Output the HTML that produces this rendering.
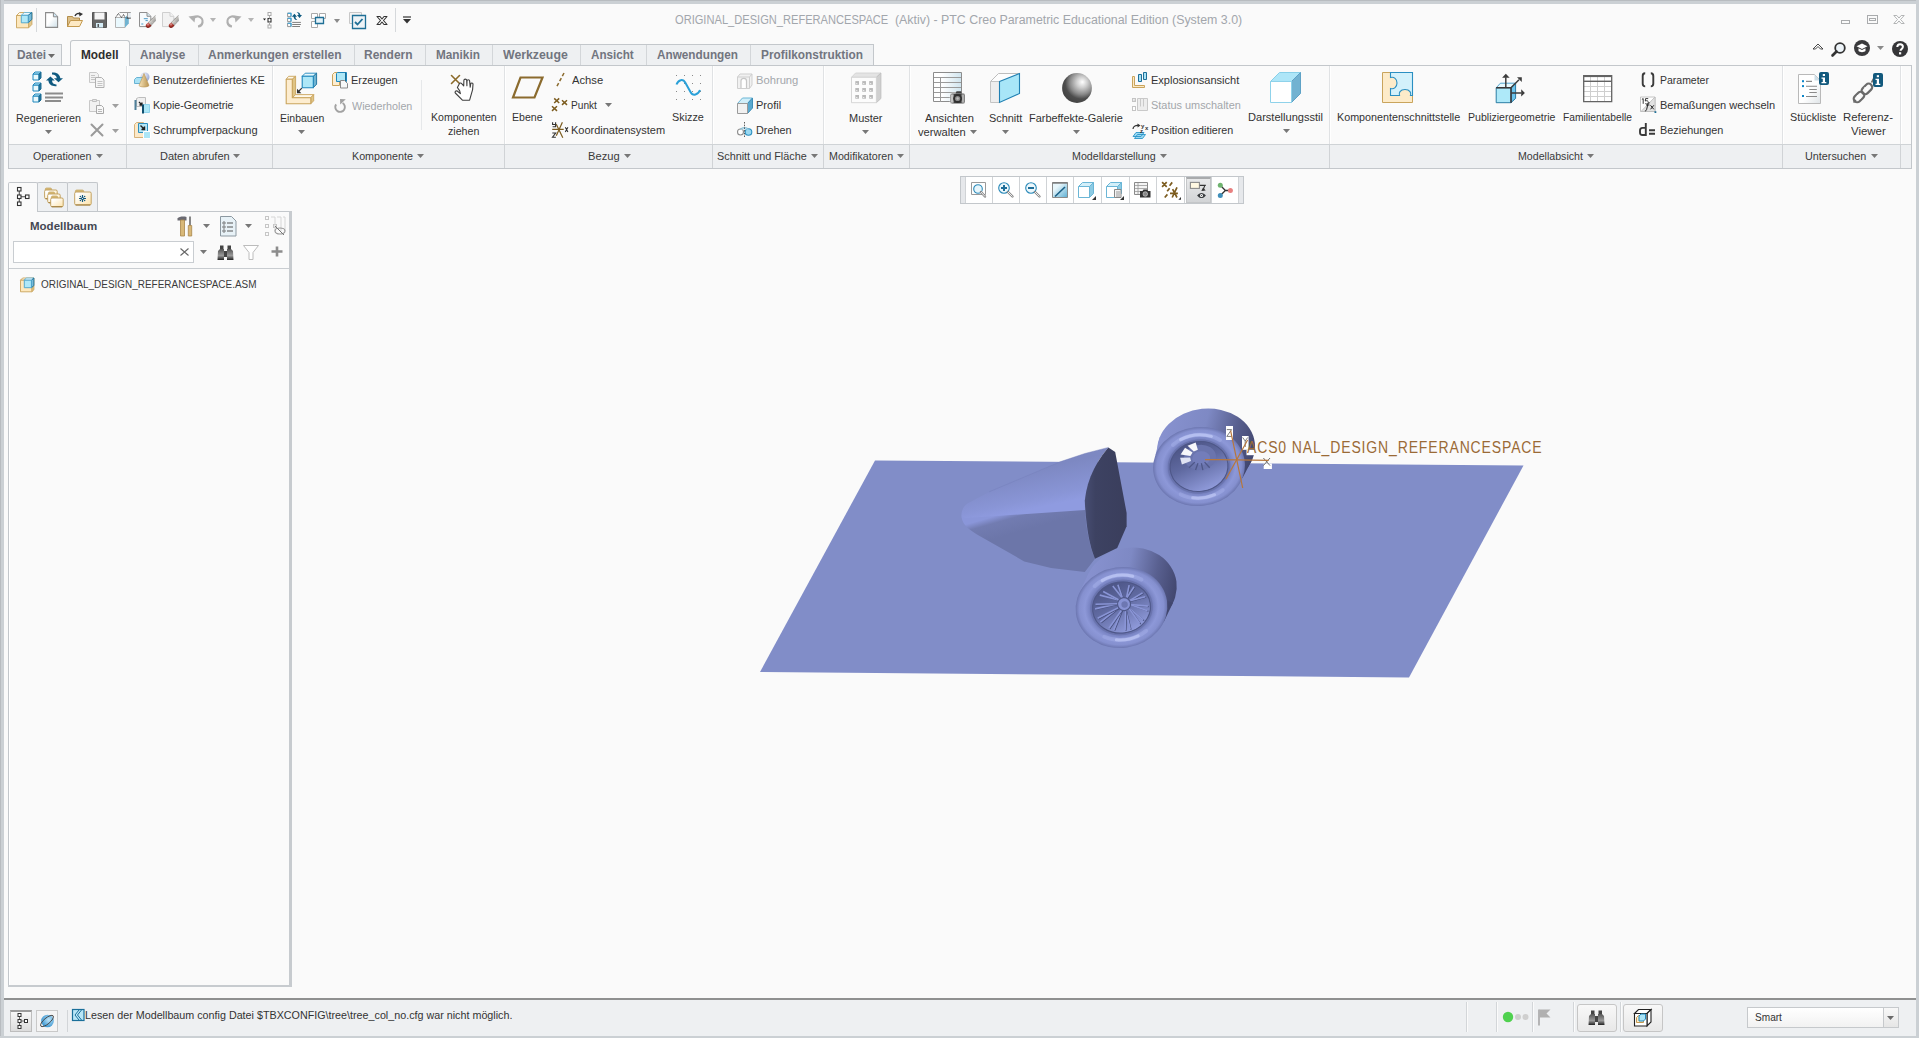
<!DOCTYPE html>
<html><head><meta charset="utf-8"><title>Creo</title>
<style>
html,body{margin:0;padding:0}
body{width:1919px;height:1038px;position:relative;overflow:hidden;background:#fafafa;font-family:"Liberation Sans",sans-serif}
.t{position:absolute;white-space:nowrap}
svg{overflow:visible}
</style></head><body>
<div style="position:absolute;left:0px;top:0px;width:1919px;height:4px;background:#cbd0d4"></div>
<div style="position:absolute;left:0px;top:0px;width:1919px;height:1px;background:#b8bcc0"></div>
<div style="position:absolute;left:0px;top:0px;width:4px;height:1038px;background:#cbd0d4"></div>
<div style="position:absolute;left:0px;top:0px;width:1px;height:1038px;background:#b8bcc0"></div>
<div style="position:absolute;left:1916px;top:0px;width:3px;height:1038px;background:#cbd0d4"></div>
<div style="position:absolute;left:0px;top:1036px;width:1919px;height:2px;background:#cbd0d4"></div>
<div class="t" style="left:674.65px;top:14.34px;font-size:12px;line-height:12px;font-weight:400;color:#a2a6ac;transform:scaleX(0.9251);transform-origin:0 0;">ORIGINAL_DESIGN_REFERANCESPACE</div>
<div class="t" style="left:895.25px;top:14.34px;font-size:12px;line-height:12px;font-weight:400;color:#a2a6ac;transform:scaleX(1.0308);transform-origin:0 0;">(Aktiv) - PTC Creo Parametric Educational Edition (System 3.0)</div>
<div style="position:absolute;left:129px;top:44px;width:745px;height:21px;background:#eef0f2;border-top:1px solid #c3c7cb;border-right:1px solid #c3c7cb;box-sizing:border-box"></div>
<div style="position:absolute;left:8px;top:44px;width:54px;height:22px;background:#eef0f2;border:1px solid #c3c7cb;border-bottom:none;box-sizing:border-box"></div>
<div style="position:absolute;left:8px;top:65px;width:1904px;height:1px;background:#c3c7cb"></div>
<div style="position:absolute;left:70px;top:40px;width:60px;height:26px;background:#fafafa;border:1px solid #c3c7cb;border-bottom:none;border-radius:3px 3px 0 0;box-sizing:border-box"></div>
<div style="position:absolute;left:198px;top:45px;width:1px;height:20px;background:#d3d6d9"></div>
<div style="position:absolute;left:354px;top:45px;width:1px;height:20px;background:#d3d6d9"></div>
<div style="position:absolute;left:425px;top:45px;width:1px;height:20px;background:#d3d6d9"></div>
<div style="position:absolute;left:492px;top:45px;width:1px;height:20px;background:#d3d6d9"></div>
<div style="position:absolute;left:580px;top:45px;width:1px;height:20px;background:#d3d6d9"></div>
<div style="position:absolute;left:646px;top:45px;width:1px;height:20px;background:#d3d6d9"></div>
<div style="position:absolute;left:750px;top:45px;width:1px;height:20px;background:#d3d6d9"></div>
<div class="t" style="left:16.60px;top:49.34px;font-size:12px;line-height:12px;font-weight:700;color:#72757f;transform:scaleX(0.9893);transform-origin:0 0;">Datei</div>
<svg style="position:absolute;left:48px;top:54px;" width="7" height="4" viewBox="0 0 7 4"><path d="M0 0H7L3.5 4Z" fill="#6a6a6a"/></svg>
<div class="t" style="left:80.81px;top:49.34px;font-size:12px;line-height:12px;font-weight:700;color:#2e2e2e;transform:scaleX(0.9865);transform-origin:0 0;">Modell</div>
<div class="t" style="left:140.41px;top:49.34px;font-size:12px;line-height:12px;font-weight:700;color:#72757f;transform:scaleX(0.9822);transform-origin:0 0;">Analyse</div>
<div class="t" style="left:208.40px;top:49.34px;font-size:12px;line-height:12px;font-weight:700;color:#72757f;transform:scaleX(1.0015);transform-origin:0 0;">Anmerkungen erstellen</div>
<div class="t" style="left:364.40px;top:49.34px;font-size:12px;line-height:12px;font-weight:700;color:#72757f;transform:scaleX(0.9979);transform-origin:0 0;">Rendern</div>
<div class="t" style="left:435.61px;top:49.34px;font-size:12px;line-height:12px;font-weight:700;color:#72757f;transform:scaleX(0.9818);transform-origin:0 0;">Manikin</div>
<div class="t" style="left:502.80px;top:49.34px;font-size:12px;line-height:12px;font-weight:700;color:#72757f;transform:scaleX(1.0254);transform-origin:0 0;">Werkzeuge</div>
<div class="t" style="left:591.00px;top:49.34px;font-size:12px;line-height:12px;font-weight:700;color:#72757f;transform:scaleX(0.9716);transform-origin:0 0;">Ansicht</div>
<div class="t" style="left:657.00px;top:49.34px;font-size:12px;line-height:12px;font-weight:700;color:#72757f;transform:scaleX(0.9793);transform-origin:0 0;">Anwendungen</div>
<div class="t" style="left:760.51px;top:49.34px;font-size:12px;line-height:12px;font-weight:700;color:#72757f;transform:scaleX(0.9868);transform-origin:0 0;">Profilkonstruktion</div>
<div style="position:absolute;left:8px;top:65px;width:1px;height:104px;background:#c3c7cb"></div>
<div style="position:absolute;left:1911px;top:65px;width:1px;height:104px;background:#c3c7cb"></div>
<div style="position:absolute;left:9px;top:144px;width:1902px;height:24px;background:#eef0f2;border-top:1px solid #cfd3d6;box-sizing:border-box"></div>
<div style="position:absolute;left:8px;top:168px;width:1904px;height:1px;background:#c3c7cb"></div>
<div style="position:absolute;left:126px;top:66px;width:1px;height:78px;background:#e0e2e4"></div>
<div style="position:absolute;left:127px;top:66px;width:1px;height:78px;background:#ffffff"></div>
<div style="position:absolute;left:126px;top:145px;width:1px;height:23px;background:#d0d3d6"></div>
<div style="position:absolute;left:272px;top:66px;width:1px;height:78px;background:#e0e2e4"></div>
<div style="position:absolute;left:273px;top:66px;width:1px;height:78px;background:#ffffff"></div>
<div style="position:absolute;left:272px;top:145px;width:1px;height:23px;background:#d0d3d6"></div>
<div style="position:absolute;left:504px;top:66px;width:1px;height:78px;background:#e0e2e4"></div>
<div style="position:absolute;left:505px;top:66px;width:1px;height:78px;background:#ffffff"></div>
<div style="position:absolute;left:504px;top:145px;width:1px;height:23px;background:#d0d3d6"></div>
<div style="position:absolute;left:712px;top:66px;width:1px;height:78px;background:#e0e2e4"></div>
<div style="position:absolute;left:713px;top:66px;width:1px;height:78px;background:#ffffff"></div>
<div style="position:absolute;left:712px;top:145px;width:1px;height:23px;background:#d0d3d6"></div>
<div style="position:absolute;left:823px;top:66px;width:1px;height:78px;background:#e0e2e4"></div>
<div style="position:absolute;left:824px;top:66px;width:1px;height:78px;background:#ffffff"></div>
<div style="position:absolute;left:823px;top:145px;width:1px;height:23px;background:#d0d3d6"></div>
<div style="position:absolute;left:909px;top:66px;width:1px;height:78px;background:#e0e2e4"></div>
<div style="position:absolute;left:910px;top:66px;width:1px;height:78px;background:#ffffff"></div>
<div style="position:absolute;left:909px;top:145px;width:1px;height:23px;background:#d0d3d6"></div>
<div style="position:absolute;left:1329px;top:66px;width:1px;height:78px;background:#e0e2e4"></div>
<div style="position:absolute;left:1330px;top:66px;width:1px;height:78px;background:#ffffff"></div>
<div style="position:absolute;left:1329px;top:145px;width:1px;height:23px;background:#d0d3d6"></div>
<div style="position:absolute;left:1782px;top:66px;width:1px;height:78px;background:#e0e2e4"></div>
<div style="position:absolute;left:1783px;top:66px;width:1px;height:78px;background:#ffffff"></div>
<div style="position:absolute;left:1782px;top:145px;width:1px;height:23px;background:#d0d3d6"></div>
<div style="position:absolute;left:1900px;top:66px;width:1px;height:78px;background:#e0e2e4"></div>
<div style="position:absolute;left:1901px;top:66px;width:1px;height:78px;background:#ffffff"></div>
<div style="position:absolute;left:1900px;top:145px;width:1px;height:23px;background:#d0d3d6"></div>
<div class="t" style="left:15.62px;top:113.19px;font-size:11px;line-height:11px;font-weight:400;color:#333333;transform:scaleX(0.9742);transform-origin:0 0;">Regenerieren</div>
<div class="t" style="left:153.40px;top:75.19px;font-size:11px;line-height:11px;font-weight:400;color:#333333;transform:scaleX(0.9946);transform-origin:0 0;">Benutzerdefiniertes KE</div>
<div class="t" style="left:153.43px;top:100.19px;font-size:11px;line-height:11px;font-weight:400;color:#333333;transform:scaleX(0.9683);transform-origin:0 0;">Kopie-Geometrie</div>
<div class="t" style="left:153.40px;top:125.19px;font-size:11px;line-height:11px;font-weight:400;color:#333333;transform:scaleX(1.0058);transform-origin:0 0;">Schrumpfverpackung</div>
<div class="t" style="left:279.53px;top:113.19px;font-size:11px;line-height:11px;font-weight:400;color:#333333;transform:scaleX(0.9544);transform-origin:0 0;">Einbauen</div>
<div class="t" style="left:350.81px;top:75.19px;font-size:11px;line-height:11px;font-weight:400;color:#333333;transform:scaleX(0.9913);transform-origin:0 0;">Erzeugen</div>
<div class="t" style="left:351.80px;top:101.19px;font-size:11px;line-height:11px;font-weight:400;color:#a3a7ab;transform:scaleX(0.9770);transform-origin:0 0;">Wiederholen</div>
<div class="t" style="left:430.53px;top:112.19px;font-size:11px;line-height:11px;font-weight:400;color:#333333;transform:scaleX(0.9596);transform-origin:0 0;">Komponenten</div>
<div class="t" style="left:448.02px;top:126.19px;font-size:11px;line-height:11px;font-weight:400;color:#333333;transform:scaleX(0.9656);transform-origin:0 0;">ziehen</div>
<div class="t" style="left:512.43px;top:112.19px;font-size:11px;line-height:11px;font-weight:400;color:#333333;transform:scaleX(0.9613);transform-origin:0 0;">Ebene</div>
<div class="t" style="left:572.40px;top:75.19px;font-size:11px;line-height:11px;font-weight:400;color:#333333;transform:scaleX(1.0194);transform-origin:0 0;">Achse</div>
<div class="t" style="left:571.46px;top:100.19px;font-size:11px;line-height:11px;font-weight:400;color:#333333;transform:scaleX(0.9214);transform-origin:0 0;">Punkt</div>
<div class="t" style="left:571.40px;top:125.19px;font-size:11px;line-height:11px;font-weight:400;color:#333333;transform:scaleX(0.9989);transform-origin:0 0;">Koordinatensystem</div>
<div class="t" style="left:672.41px;top:112.19px;font-size:11px;line-height:11px;font-weight:400;color:#333333;transform:scaleX(0.9844);transform-origin:0 0;">Skizze</div>
<div class="t" style="left:756.39px;top:75.19px;font-size:11px;line-height:11px;font-weight:400;color:#a3a7ab;transform:scaleX(1.0175);transform-origin:0 0;">Bohrung</div>
<div class="t" style="left:756.40px;top:100.19px;font-size:11px;line-height:11px;font-weight:400;color:#333333;transform:scaleX(1.0042);transform-origin:0 0;">Profil</div>
<div class="t" style="left:756.41px;top:125.19px;font-size:11px;line-height:11px;font-weight:400;color:#333333;transform:scaleX(0.9829);transform-origin:0 0;">Drehen</div>
<div class="t" style="left:848.60px;top:113.19px;font-size:11px;line-height:11px;font-weight:400;color:#333333;transform:scaleX(0.9970);transform-origin:0 0;">Muster</div>
<div class="t" style="left:924.60px;top:113.19px;font-size:11px;line-height:11px;font-weight:400;color:#333333;transform:scaleX(1.0125);transform-origin:0 0;">Ansichten</div>
<div class="t" style="left:918.21px;top:127.19px;font-size:11px;line-height:11px;font-weight:400;color:#333333;transform:scaleX(1.0128);transform-origin:0 0;">verwalten</div>
<div class="t" style="left:988.61px;top:113.19px;font-size:11px;line-height:11px;font-weight:400;color:#333333;transform:scaleX(0.9909);transform-origin:0 0;">Schnitt</div>
<div class="t" style="left:1029.41px;top:113.19px;font-size:11px;line-height:11px;font-weight:400;color:#333333;transform:scaleX(0.9926);transform-origin:0 0;">Farbeffekte-Galerie</div>
<div class="t" style="left:1151.20px;top:75.19px;font-size:11px;line-height:11px;font-weight:400;color:#333333;transform:scaleX(1.0023);transform-origin:0 0;">Explosionsansicht</div>
<div class="t" style="left:1151.21px;top:100.19px;font-size:11px;line-height:11px;font-weight:400;color:#a3a7ab;transform:scaleX(0.9921);transform-origin:0 0;">Status umschalten</div>
<div class="t" style="left:1151.22px;top:125.19px;font-size:11px;line-height:11px;font-weight:400;color:#333333;transform:scaleX(0.9747);transform-origin:0 0;">Position editieren</div>
<div class="t" style="left:1247.99px;top:112.19px;font-size:11px;line-height:11px;font-weight:400;color:#333333;transform:scaleX(1.0055);transform-origin:0 0;">Darstellungsstil</div>
<div class="t" style="left:1337.01px;top:112.19px;font-size:11px;line-height:11px;font-weight:400;color:#333333;transform:scaleX(0.9776);transform-origin:0 0;">Komponentenschnittstelle</div>
<div class="t" style="left:1467.63px;top:112.19px;font-size:11px;line-height:11px;font-weight:400;color:#333333;transform:scaleX(0.9600);transform-origin:0 0;">Publiziergeometrie</div>
<div class="t" style="left:1562.65px;top:112.19px;font-size:11px;line-height:11px;font-weight:400;color:#333333;transform:scaleX(0.9315);transform-origin:0 0;">Familientabelle</div>
<div class="t" style="left:1659.83px;top:75.19px;font-size:11px;line-height:11px;font-weight:400;color:#333333;transform:scaleX(0.9529);transform-origin:0 0;">Parameter</div>
<div class="t" style="left:1659.80px;top:100.19px;font-size:11px;line-height:11px;font-weight:400;color:#333333;transform:scaleX(1.0018);transform-origin:0 0;">Bemaßungen wechseln</div>
<div class="t" style="left:1659.81px;top:125.19px;font-size:11px;line-height:11px;font-weight:400;color:#333333;transform:scaleX(0.9873);transform-origin:0 0;">Beziehungen</div>
<div class="t" style="left:1789.81px;top:112.19px;font-size:11px;line-height:11px;font-weight:400;color:#333333;transform:scaleX(0.9826);transform-origin:0 0;">Stückliste</div>
<div class="t" style="left:1843.37px;top:112.19px;font-size:11px;line-height:11px;font-weight:400;color:#333333;transform:scaleX(1.0340);transform-origin:0 0;">Referenz-</div>
<div class="t" style="left:1851.22px;top:126.19px;font-size:11px;line-height:11px;font-weight:400;color:#333333;transform:scaleX(1.0412);transform-origin:0 0;">Viewer</div>
<div class="t" style="left:32.82px;top:151.19px;font-size:11px;line-height:11px;font-weight:400;color:#3a3a3a;transform:scaleX(0.9650);transform-origin:0 0;">Operationen</div>
<svg style="position:absolute;left:96px;top:154px;" width="7" height="4" viewBox="0 0 7 4"><path d="M0 0H7L3.5 4Z" fill="#777"/></svg>
<div class="t" style="left:159.60px;top:151.19px;font-size:11px;line-height:11px;font-weight:400;color:#3a3a3a;transform:scaleX(0.9986);transform-origin:0 0;">Daten abrufen</div>
<svg style="position:absolute;left:233px;top:154px;" width="7" height="4" viewBox="0 0 7 4"><path d="M0 0H7L3.5 4Z" fill="#777"/></svg>
<div class="t" style="left:352.02px;top:151.19px;font-size:11px;line-height:11px;font-weight:400;color:#3a3a3a;transform:scaleX(0.9754);transform-origin:0 0;">Komponente</div>
<svg style="position:absolute;left:417px;top:154px;" width="7" height="4" viewBox="0 0 7 4"><path d="M0 0H7L3.5 4Z" fill="#777"/></svg>
<div class="t" style="left:587.59px;top:151.19px;font-size:11px;line-height:11px;font-weight:400;color:#3a3a3a;transform:scaleX(1.0133);transform-origin:0 0;">Bezug</div>
<svg style="position:absolute;left:624px;top:154px;" width="7" height="4" viewBox="0 0 7 4"><path d="M0 0H7L3.5 4Z" fill="#777"/></svg>
<div class="t" style="left:717.41px;top:151.19px;font-size:11px;line-height:11px;font-weight:400;color:#3a3a3a;transform:scaleX(0.9844);transform-origin:0 0;">Schnitt und Fläche</div>
<svg style="position:absolute;left:811px;top:154px;" width="7" height="4" viewBox="0 0 7 4"><path d="M0 0H7L3.5 4Z" fill="#777"/></svg>
<div class="t" style="left:828.82px;top:151.19px;font-size:11px;line-height:11px;font-weight:400;color:#3a3a3a;transform:scaleX(0.9708);transform-origin:0 0;">Modifikatoren</div>
<svg style="position:absolute;left:897px;top:154px;" width="7" height="4" viewBox="0 0 7 4"><path d="M0 0H7L3.5 4Z" fill="#777"/></svg>
<div class="t" style="left:1072.03px;top:151.19px;font-size:11px;line-height:11px;font-weight:400;color:#3a3a3a;transform:scaleX(0.9706);transform-origin:0 0;">Modelldarstellung</div>
<svg style="position:absolute;left:1160px;top:154px;" width="7" height="4" viewBox="0 0 7 4"><path d="M0 0H7L3.5 4Z" fill="#777"/></svg>
<div class="t" style="left:1517.62px;top:151.19px;font-size:11px;line-height:11px;font-weight:400;color:#3a3a3a;transform:scaleX(0.9657);transform-origin:0 0;">Modellabsicht</div>
<svg style="position:absolute;left:1587px;top:154px;" width="7" height="4" viewBox="0 0 7 4"><path d="M0 0H7L3.5 4Z" fill="#777"/></svg>
<div class="t" style="left:1805.01px;top:151.19px;font-size:11px;line-height:11px;font-weight:400;color:#3a3a3a;transform:scaleX(0.9823);transform-origin:0 0;">Untersuchen</div>
<svg style="position:absolute;left:1871px;top:154px;" width="7" height="4" viewBox="0 0 7 4"><path d="M0 0H7L3.5 4Z" fill="#777"/></svg>
<svg style="position:absolute;left:45px;top:130px;" width="7" height="4" viewBox="0 0 7 4"><path d="M0 0H7L3.5 4Z" fill="#777"/></svg>
<svg style="position:absolute;left:298px;top:130px;" width="7" height="4" viewBox="0 0 7 4"><path d="M0 0H7L3.5 4Z" fill="#777"/></svg>
<svg style="position:absolute;left:862px;top:130px;" width="7" height="4" viewBox="0 0 7 4"><path d="M0 0H7L3.5 4Z" fill="#777"/></svg>
<svg style="position:absolute;left:970px;top:130px;" width="7" height="4" viewBox="0 0 7 4"><path d="M0 0H7L3.5 4Z" fill="#777"/></svg>
<svg style="position:absolute;left:1002px;top:130px;" width="7" height="4" viewBox="0 0 7 4"><path d="M0 0H7L3.5 4Z" fill="#777"/></svg>
<svg style="position:absolute;left:1073px;top:130px;" width="7" height="4" viewBox="0 0 7 4"><path d="M0 0H7L3.5 4Z" fill="#777"/></svg>
<svg style="position:absolute;left:1283px;top:129px;" width="7" height="4" viewBox="0 0 7 4"><path d="M0 0H7L3.5 4Z" fill="#777"/></svg>
<svg style="position:absolute;left:605px;top:103px;" width="7" height="4" viewBox="0 0 7 4"><path d="M0 0H7L3.5 4Z" fill="#777"/></svg>
<svg style="position:absolute;left:112px;top:104px;" width="7" height="4" viewBox="0 0 7 4"><path d="M0 0H7L3.5 4Z" fill="#a0a0a0"/></svg>
<svg style="position:absolute;left:112px;top:129px;" width="7" height="4" viewBox="0 0 7 4"><path d="M0 0H7L3.5 4Z" fill="#a0a0a0"/></svg>
<svg style="position:absolute;left:32px;top:71px;" width="32" height="32" viewBox="0 0 32 32"><path d="M1.0 3.0h6v6h-6z" fill="#e9f9fd" stroke="#1f87bd"/><path d="M1.0 3.0l2-2h6l-2 2z" fill="#bfeaf7" stroke="#1f87bd" stroke-linejoin="round"/><path d="M7.0 3.0l2-2v6l-2 2z" fill="#1f6f96" stroke="#1f6f96"/><path d="M1.0 14.0h6v6h-6z" fill="#e9f9fd" stroke="#1f87bd"/><path d="M1.0 14.0l2-2h6l-2 2z" fill="#bfeaf7" stroke="#1f87bd" stroke-linejoin="round"/><path d="M7.0 14.0l2-2v6l-2 2z" fill="#1f6f96" stroke="#1f6f96"/><path d="M1.0 25.0h6v6h-6z" fill="#e9f9fd" stroke="#1f87bd"/><path d="M1.0 25.0l2-2h6l-2 2z" fill="#bfeaf7" stroke="#1f87bd" stroke-linejoin="round"/><path d="M7.0 25.0l2-2v6l-2 2z" fill="#1f6f96" stroke="#1f6f96"/><path d="M13 22.5h18M13 26.5h18M13 30h16" stroke="#8c8c8c" stroke-width="2.2"/><path d="M20 1.6C24.2 1.3 27.8 3 28.3 7.3L31 7.3 26.5 11.2 22 7.3 24.8 7.3C24.4 4.6 22.6 3.4 20 3.5Z" fill="#0f5a80"/><path d="M24.5 15.2C20.3 15.6 16.8 14 16.4 9.6L14 9.6 18.4 5.4 22.8 9.6 20 9.6C20.2 12.4 22 13.6 24.5 13.4Z" fill="#0f5a80"/></svg>
<svg style="position:absolute;left:89px;top:72px;" width="16" height="16" viewBox="0 0 16 16"><path d="M0.5 0.5h7l2 2v8h-9z" fill="#f2f2f2" stroke="#c8c8c8"/><path d="M6.5 5.5h6l2.5 2.5v7.5h-8.5z" fill="#f6f6f6" stroke="#b0b0b0"/><path d="M8.5 9.5h5M8.5 11.5h5M8.5 13.5h5M2 3.5h4M2 5.5h4M2 7.5h4" stroke="#c4c4c4"/></svg>
<svg style="position:absolute;left:89px;top:98px;" width="16" height="16" viewBox="0 0 16 16"><path d="M0.5 2.5h10v11h-10z" fill="#f2f2f2" stroke="#c8c8c8"/><path d="M3.5 1.5h4v2h-4z" fill="#e8e8e8" stroke="#c0c0c0"/><path d="M7.5 7.5h5l2 2v6h-7z" fill="#f8f8f8" stroke="#a8a8a8"/><path d="M9 11.5h4M9 13.5h4" stroke="#b8b8b8"/></svg>
<svg style="position:absolute;left:90px;top:123px;" width="14" height="14" viewBox="0 0 14 14"><path d="M1.5 1.5L12.5 12.5M12.5 1.5L1.5 12.5" stroke="#9a9a9a" stroke-width="2" stroke-linecap="round"/></svg>
<svg style="position:absolute;left:134px;top:72px;" width="17" height="16" viewBox="0 0 17 16"><defs><radialGradient id="sph1" cx="0.35" cy="0.3" r="0.8"><stop offset="0" stop-color="#f4f6fb"/><stop offset="1" stop-color="#8f9fd0"/></radialGradient><linearGradient id="cone1" x1="0" x2="1"><stop offset="0" stop-color="#f7e3b8"/><stop offset="1" stop-color="#b89350"/></linearGradient></defs><circle cx="11" cy="5" r="4.5" fill="url(#sph1)"/><path d="M0.5 7.5l2-2h7v6h-9z" fill="#a9e2f5" stroke="#68b2d3"/><path d="M10 1.5L5 13.5c1.5 2 8.5 2 10 0z" fill="url(#cone1)" stroke="#b89350" stroke-width="0.6"/></svg>
<svg style="position:absolute;left:134px;top:97px;" width="17" height="17" viewBox="0 0 17 17"><path d="M2.5 1.5l2-1h7v9h-9z" fill="#efefef" stroke="#bdbdbd"/><path d="M0.5 3h2v10h-2z" fill="#4f7f99"/><path d="M5 5l3 3M8 5.5v2.5h-2.5" stroke="#222" stroke-width="1.3"/><path d="M9.5 7.5h6v8h-6z" fill="#ace6f6" stroke="#8fd3ec"/><path d="M8 7.5h2v9h-2z" fill="#0f4f6f"/></svg>
<svg style="position:absolute;left:134px;top:122px;" width="17" height="17" viewBox="0 0 17 17"><path d="M0.5 2.5l2-2h7v15h-9z" fill="#fde9c8" stroke="#d6b27a"/><path d="M4.5 1.5h9v9h-9z" fill="#b5e6f6" stroke="#2c8fbf"/><path d="M6.5 3.5l4 4M10.5 4.5v3h-3" stroke="#222" stroke-width="1.4"/><path d="M9.5 9.5h7v7h-7z" fill="#ace6f6" stroke="#fff"/></svg>
<svg style="position:absolute;left:285px;top:72px;" width="33" height="33" viewBox="0 0 33 33"><path d="M1.2 7.2L3.6 4.3H10.6L7.3 7.2Z" fill="#fff8ea" stroke="#c9a45c" stroke-width="0.9"/><path d="M7.3 7.2L10.6 4.3V22.6L7.3 25.7Z" fill="#dfc486" stroke="#c9a45c" stroke-width="0.9"/><path d="M7.3 25.7L10.6 22.6H28.7L25.8 25.7Z" fill="#fff8ea" stroke="#c9a45c" stroke-width="0.9"/><path d="M25.8 25.7L28.7 22.6V28.8L25.8 31.7Z" fill="#dfc486" stroke="#c9a45c" stroke-width="0.9"/><path d="M1.2 7.2H7.3V25.7H25.8V31.7H1.2Z" fill="#fdedd0" stroke="#c9a45c" stroke-width="1.1" stroke-linejoin="round"/><path d="M17.2 4.3L20.2 1.2H31.6L28.3 4.3Z" fill="#e6f7fc" stroke="#1f87bd" stroke-width="0.9"/><path d="M28.3 4.3L31.6 1.2V12.2L28.3 15.7Z" fill="#6fb3d1" stroke="#1a6f9a" stroke-width="0.9"/><path d="M17.2 4.3H28.3V15.7H17.2Z" fill="#aee7f7" stroke="#1f87bd" stroke-width="1.1"/><path d="M16.8 16.2L13 20" stroke="#333" stroke-width="1.2"/><path d="M12 16.8V21.2H16.4Z" fill="#333"/></svg>
<svg style="position:absolute;left:332px;top:72px;" width="16" height="16" viewBox="0 0 16 16"><path d="M0.5 2.5l2-2h5v13h-7z" fill="#fdedd0" stroke="#c9a45c"/><path d="M4.5 1.5l1-1h9v9h-10z" fill="#aee7f7" stroke="#1f87bd"/><path d="M13.5 0.5v9" stroke="#1b6d96"/><path d="M8.5 8.5h4l3 3v4.5h-7z" fill="#f7f8f8" stroke="#8a8a8a"/></svg>
<svg style="position:absolute;left:334px;top:98px;" width="14" height="15" viewBox="0 0 14 15"><path d="M2.1 6.4A4.8 4.8 0 1 0 8.6 5" fill="none" stroke="#a2a2a2" stroke-width="1.9"/><path d="M6 1L11.8 1.2 6.2 6.6Z" fill="#a2a2a2"/></svg>
<div style="position:absolute;left:421px;top:80px;width:1px;height:50px;background:#e6e8ea"></div>
<svg style="position:absolute;left:450px;top:74px;" width="28" height="30" viewBox="0 0 28 30"><path d="M1.5 1.5l8 8M9.5 1.5l-8 8" stroke="#8b6a2a" stroke-width="1.6" stroke-linecap="round"/><path d="M9.5 9.5c0.5-0.8 1.6-0.7 2.2 0.1l2 2.3 0.2-5.7c0.1-1.5 2.7-1.5 2.8 0l0.2 5.5 0.1-4.9c0.1-1.4 2.5-1.4 2.6 0l0.6 6.3 0.5-3.3c0.3-1.2 2.3-1 2.3 0.3l-0.4 5.5-3 10.6h-7.2l-7.1-7.2c-0.8-1 0.4-2.7 1.9-2l3.2 2.6 -0.7-2.7-2.3-3.4z" fill="#fff" stroke="#3f3f3f" stroke-width="1.1" stroke-linejoin="round"/></svg>
<svg style="position:absolute;left:512px;top:76px;" width="32" height="23" viewBox="0 0 32 23"><path d="M8.5 1.5h22l-8 20h-21.5z" fill="none" stroke="#8b6b2e" stroke-width="2.2" stroke-linejoin="miter"/></svg>
<svg style="position:absolute;left:555px;top:72px;" width="10" height="17" viewBox="0 0 10 17"><path d="M9 1L1 16" stroke="#8b6b2e" stroke-width="1.5" stroke-dasharray="3.5 2.2"/></svg>
<svg style="position:absolute;left:551px;top:98px;" width="17" height="14" viewBox="0 0 17 14"><path d="M3.2 0.4l5 4.6M8.2 0.4l-5 4.6M11 2.2l5 4.7M16 2.2l-5 4.7M1 8.2l5 4.7M6 8.2l-5 4.7" stroke="#7c5c1f" stroke-width="1.5"/></svg>
<svg style="position:absolute;left:551px;top:122px;" width="18" height="17" viewBox="0 0 18 17"><path d="M1.2 7.4h11.5M5.3 2.3l6.5 13.4M11.4 0.2L5.3 13.7" stroke="#7c5c1f" stroke-width="1.2"/><path d="M1.6 0.3v2.2h3M4.6 0.3v4.5h-3M1.3 11h3.4l-3.2 4.2h3.4M14.3 5.3l2.6 4.6M16.9 5.3l-2.6 4.6" fill="none" stroke="#333" stroke-width="1.1"/></svg>
<svg style="position:absolute;left:676px;top:75px;" width="26" height="26" viewBox="0 0 26 26"><rect x="0" y="0" width="1" height="1" fill="#8a8a8a"/><rect x="0" y="8" width="1" height="1" fill="#8a8a8a"/><rect x="0" y="16" width="1" height="1" fill="#8a8a8a"/><rect x="0" y="24" width="1" height="1" fill="#8a8a8a"/><rect x="8" y="0" width="1" height="1" fill="#8a8a8a"/><rect x="8" y="8" width="1" height="1" fill="#8a8a8a"/><rect x="8" y="16" width="1" height="1" fill="#8a8a8a"/><rect x="8" y="24" width="1" height="1" fill="#8a8a8a"/><rect x="16" y="0" width="1" height="1" fill="#8a8a8a"/><rect x="16" y="8" width="1" height="1" fill="#8a8a8a"/><rect x="16" y="16" width="1" height="1" fill="#8a8a8a"/><rect x="16" y="24" width="1" height="1" fill="#8a8a8a"/><rect x="24" y="0" width="1" height="1" fill="#8a8a8a"/><rect x="24" y="8" width="1" height="1" fill="#8a8a8a"/><rect x="24" y="16" width="1" height="1" fill="#8a8a8a"/><rect x="24" y="24" width="1" height="1" fill="#8a8a8a"/><path d="M0.5 9.5c2-5 6.5-6 9-1.5l5 9c2.5 4.5 7.5 3 9.5-2" fill="none" stroke="#2aa0d8" stroke-width="2"/></svg>
<svg style="position:absolute;left:737px;top:73px;" width="16" height="16" viewBox="0 0 16 16"><path d="M0.5 4l2.5-3h12v11l-2.5 3.5h-12z" fill="#f1f1f1" stroke="#cfcfcf"/><path d="M4 15V8c0-3.5 5.5-3.5 5.5 0v7" fill="#fff" stroke="#c6c6c6" stroke-width="1.2"/><path d="M12.5 4v11.5M0.5 4h12l2.5-3" fill="none" stroke="#cfcfcf"/></svg>
<svg style="position:absolute;left:737px;top:97px;" width="16" height="17" viewBox="0 0 16 17"><path d="M0.5 6.5l5-5.5h10l-5 5.5z" fill="#d0eef9" stroke="#6bb6d6"/><path d="M10.5 6.5l5-5.5v10l-5 5.5z" fill="#5aa9cf" stroke="#3f8fb8"/><path d="M0.5 6.5h10v10h-10z" fill="#f1f1f1" stroke="#9a9a9a"/></svg>
<svg style="position:absolute;left:737px;top:122px;" width="16" height="17" viewBox="0 0 16 17"><circle cx="3.5" cy="10" r="3" fill="#fff" stroke="#8f8f8f" stroke-width="1.1"/><circle cx="11.5" cy="10" r="3.3" fill="#9bd9f2" stroke="#2a8fc0" stroke-width="1.1"/><path d="M3 7.5c2-2.5 7-2.5 9 0" fill="#bfe6f5" stroke="#7fb7cf"/><path d="M7.5 0v16" stroke="#333" stroke-width="0.8" stroke-dasharray="1.5 1.2"/></svg>
<svg style="position:absolute;left:851px;top:72px;" width="31" height="32" viewBox="0 0 31 32"><path d="M0.5 5.3L4.6 1H29.9L25.4 5.3Z" fill="#e4e4e4" stroke="#d4d4d4" stroke-width="0.9"/><path d="M25.4 5.3L29.9 1V26.5L25.4 30.7Z" fill="#d0d0d0" stroke="#c0c0c0" stroke-width="0.9"/><path d="M0.5 5.3H25.4V30.7H0.5Z" fill="#fcfcfc" stroke="#d2d2d2" stroke-width="0.9"/><rect x="4.30" y="9.10" width="3.7" height="3.7" fill="#b9b9b9"/><rect x="5.30" y="11.10" width="1" height="1" fill="#fff"/><rect x="4.30" y="16.05" width="3.7" height="3.7" fill="#b9b9b9"/><rect x="5.30" y="18.05" width="1" height="1" fill="#fff"/><rect x="4.30" y="23.00" width="3.7" height="3.7" fill="#b9b9b9"/><rect x="5.30" y="25.00" width="1" height="1" fill="#fff"/><rect x="11.25" y="9.10" width="3.7" height="3.7" fill="#b9b9b9"/><rect x="12.25" y="11.10" width="1" height="1" fill="#fff"/><rect x="11.25" y="16.05" width="3.7" height="3.7" fill="#b9b9b9"/><rect x="12.25" y="18.05" width="1" height="1" fill="#fff"/><rect x="11.25" y="23.00" width="3.7" height="3.7" fill="#b9b9b9"/><rect x="12.25" y="25.00" width="1" height="1" fill="#fff"/><rect x="18.20" y="9.10" width="3.7" height="3.7" fill="#b9b9b9"/><rect x="19.20" y="11.10" width="1" height="1" fill="#fff"/><rect x="18.20" y="16.05" width="3.7" height="3.7" fill="#b9b9b9"/><rect x="19.20" y="18.05" width="1" height="1" fill="#fff"/><rect x="18.20" y="23.00" width="3.7" height="3.7" fill="#b9b9b9"/><rect x="19.20" y="25.00" width="1" height="1" fill="#fff"/></svg>
<svg style="position:absolute;left:933px;top:72px;" width="33" height="32" viewBox="0 0 33 32"><defs><linearGradient id="tbl" x1="0" x2="1"><stop offset="0.3" stop-color="#fff"/><stop offset="1" stop-color="#cfe4ee"/></linearGradient></defs><path d="M0.5 0.5h28v29h-28z" fill="url(#tbl)" stroke="#8c8c8c"/><path d="M1 5.5h27" stroke="#9a9a9a"/><path d="M1 10.5h27" stroke="#9a9a9a"/><path d="M1 15.5h27" stroke="#9a9a9a"/><path d="M1 20.5h27" stroke="#9a9a9a"/><path d="M1 25.5h27" stroke="#9a9a9a"/><path d="M7.5 5v25" stroke="#9a9a9a"/><rect x="17.2" y="21.2" width="14.8" height="10.6" rx="1.8" fill="#3f3f3f" stroke="#fff" stroke-width="0.6"/><rect x="18" y="22.3" width="2.6" height="8.5" fill="#c4c4c4"/><rect x="28.6" y="22.3" width="2.6" height="8.5" fill="#b0b0b0"/><path d="M22.5 21.5l1-2.2h4.5l1 2.2z" fill="#3f3f3f"/><circle cx="24.6" cy="26.5" r="4.4" fill="#2f2f2f"/><circle cx="24.6" cy="26.5" r="2.6" fill="#8a8a8a"/><circle cx="24.6" cy="26.5" r="1.2" fill="#bdbdbd"/></svg>
<svg style="position:absolute;left:990px;top:73px;" width="31" height="31" viewBox="0 0 31 31"><path d="M0.5 8.5l8-8h21l-8.5 8z" fill="#fdfdfd" stroke="#bdbdbd"/><path d="M9.5 8.5h-9v21h9z" fill="#eeeeee" stroke="#c4c4c4"/><path d="M9.5 8.5l20-8v20l-20 9z" fill="#a8e6f8" stroke="#2180b3" stroke-width="1.1"/></svg>
<svg style="position:absolute;left:1062px;top:72px;" width="31" height="32" viewBox="0 0 31 32"><defs><radialGradient id="gsph" cx="0.64" cy="0.33" r="0.66" fx="0.68" fy="0.3"><stop offset="0" stop-color="#ffffff"/><stop offset="0.28" stop-color="#cdcdcd"/><stop offset="0.6" stop-color="#8a8a8a"/><stop offset="0.82" stop-color="#4d4d4d"/><stop offset="1" stop-color="#454545"/></radialGradient></defs><circle cx="15" cy="16" r="14.9" fill="url(#gsph)"/></svg>
<svg style="position:absolute;left:1132px;top:72px;" width="16" height="16" viewBox="0 0 16 16"><path d="M0.5 4.5h2v9h10v2h-12z" fill="#fde9c6" stroke="#c9a45c"/><path d="M6.5 2.5h3v7h-3zM11.5 0.5h3v7h-3z" fill="#a9e2f5" stroke="#1d6f99"/></svg>
<svg style="position:absolute;left:1132px;top:98px;" width="16" height="14" viewBox="0 0 16 14"><rect x="0.5" y="0.5" width="3" height="3" fill="#fff" stroke="#c4c4c4"/><rect x="1.6" y="1.6" width="1" height="1" fill="#9a9a9a"/><rect x="0.5" y="8.5" width="3" height="4" fill="#fff" stroke="#c4c4c4"/><path d="M5.5 0.5h10v12h-10z" fill="#ededed" stroke="#c9c9c9"/><path d="M8.5 0.5v8M11.5 0.5v8" stroke="#c9c9c9"/></svg>
<svg style="position:absolute;left:1132px;top:122px;" width="17" height="17" viewBox="0 0 17 17"><path d="M1 14.5l3-4h8l-3 4zM2.5 16.5l3-4h8l-3 4z" fill="#9bd9f2" stroke="#2a95c9" stroke-width="0.9"/><path d="M1 7c0-3 3-4 6-3.5" fill="none" stroke="#333" stroke-width="1.2"/><path d="M5.5 1.5l3 2-3 2z" fill="#333"/><text x="9" y="5.5" font-family="Liberation Sans" font-size="6" font-weight="700" fill="#333">y</text><text x="8" y="11" font-family="Liberation Sans" font-size="6" font-weight="700" fill="#333">z</text><text x="13" y="8" font-family="Liberation Sans" font-size="6" font-weight="700" fill="#333">x</text></svg>
<svg style="position:absolute;left:1270px;top:72px;" width="31" height="32" viewBox="0 0 31 32"><path d="M0.5 9.5l9-9h21l-9 9z" fill="#aee6f8" stroke="#87cfe8"/><path d="M21.5 9.5l9-9v21l-9 9z" fill="#72b2d1" stroke="#5ea2c6"/><path d="M0.5 9.5h21v21h-21z" fill="#fff" stroke="#8fd2ea"/></svg>
<svg style="position:absolute;left:1382px;top:72px;" width="32" height="32" viewBox="0 0 32 32"><path d="M0.5 0.5h30v30h-30z" fill="#fdebc9" stroke="#c9a45c"/><path d="M8.5 0.5H30.5V23.5H28.5C29.5 21 28 17.5 23 17.5C18 17.5 16.5 21 17.5 23.5H8.5V16.5C12 17.5 15 15 15 11C15 7 12 4.5 8.5 5.5Z" fill="#d3f1fb" stroke="#2a8fc2" stroke-width="1.1"/></svg>
<svg style="position:absolute;left:1495px;top:73px;" width="31" height="31" viewBox="0 0 31 31"><path d="M1.2 14.8L5.4 10.2H20.6L16 14.8Z" fill="#e6f8fd" stroke="#2a8fc2" stroke-width="0.8"/><path d="M16 14.8L20.6 10.2V25.4L16 29.7Z" fill="#6cc3ec" stroke="#1a6f9a" stroke-width="0.9"/><path d="M1.2 14.8H16V29.7H1.2Z" fill="#aee9f9" stroke="#1a6f9a" stroke-width="0.9"/><path d="M1.2 14.8H16V29.7" fill="none" stroke="#3c3636" stroke-width="1.5"/><path d="M10.8 14.8V4.3M16 14.8L24 6.8M16 19.9H26.5" stroke="#3c3c3c" stroke-width="1.5"/><path d="M7.1 4.7H14.7L10.8 0.8ZM22 4.2H26.8V9Z M26.2 16.2V23.6L29.9 19.9Z" fill="#3c3c3c"/></svg>
<svg style="position:absolute;left:1583px;top:75px;" width="30" height="28" viewBox="0 0 30 28"><path d="M0.7 0.7h28v26h-28z" fill="#fff"/><path d="M1 11.5h27" stroke="#cfcfcf" stroke-width="1"/><path d="M1 16.5h27" stroke="#cfcfcf" stroke-width="1"/><path d="M1 21.5h27" stroke="#cfcfcf" stroke-width="1"/><path d="M7.5 2v24" stroke="#cfcfcf" stroke-width="1"/><path d="M14.5 2v24" stroke="#cfcfcf" stroke-width="1"/><path d="M21.5 2v24" stroke="#cfcfcf" stroke-width="1"/><path d="M0.7 0.7h28v26h-28z" fill="none" stroke="#636363" stroke-width="1.3"/><path d="M0.7 1.2h28" stroke="#636363" stroke-width="1.8"/><path d="M0.7 6.3h28" stroke="#636363" stroke-width="1.4"/></svg>
<svg style="position:absolute;left:1641px;top:72px;" width="15" height="16" viewBox="0 0 15 16"><path d="M4.2 1.2C2.2 1.2 1.7 2.2 1.7 4v7.6c0 1.8 0.5 2.8 2.5 2.8M9.8 1.2c2 0 2.5 1 2.5 2.8v7.6c0 1.8-0.5 2.8-2.5 2.8" fill="none" stroke="#3a3a3a" stroke-width="1.9"/></svg>
<svg style="position:absolute;left:1640px;top:96px;" width="17" height="17" viewBox="0 0 17 17"><path d="M0.5 1h14.5v14.5h-14.5z" fill="#fff" stroke="#bdbdbd" stroke-width="0.9"/><path d="M15 1L1 15.5h14z" fill="#e2e2e2" stroke="#bdbdbd" stroke-width="0.9"/><path d="M1.9 3.4l1.3-0.8v5.2M5.6 2.6H8.2M5.6 2.6l-0.3 2.4c1.8-0.8 3 0 3 1.4s-1.4 2-3 1.2" fill="none" stroke="#222" stroke-width="0.9"/><path d="M9.6 6.8c-1.2 0-1.6 0.6-1.9 2l-1 4.5c-0.3 1.2-0.8 1.6-1.8 1.6M6.2 9h3.2M10.5 9.3l3.3 4M13.8 9.3l-3.3 4" fill="none" stroke="#222" stroke-width="1"/><rect x="14.5" y="15.2" width="1.8" height="1.8" fill="#1f6f96"/></svg>
<svg style="position:absolute;left:1639px;top:123px;" width="17" height="13" viewBox="0 0 17 13"><path d="M6.8 0v12H3.5C1.8 12 1 11 1 9.2V7.6C1 5.8 1.8 4.9 3.5 4.9H6.8" fill="none" stroke="#3a3a3a" stroke-width="1.9"/><path d="M10 7.2h6M10 10.7h6" stroke="#3a3a3a" stroke-width="1.9"/></svg>
<svg style="position:absolute;left:1798px;top:72px;" width="32" height="33" viewBox="0 0 32 33"><defs><linearGradient id="pg" x1="0" y1="0" x2="1" y2="1"><stop offset="0.55" stop-color="#ffffff"/><stop offset="1" stop-color="#dfe4e7"/></linearGradient></defs><path d="M0.5 2.5H16.5L22.5 8.5V31.5H0.5Z" fill="url(#pg)" stroke="#b9b9b9"/><path d="M16.5 2.5V8.5H22.5Z" fill="#cfdfe8"/><rect x="4" y="8.2" width="2" height="2" fill="#0e86c8"/><rect x="4" y="13.1" width="2" height="2" fill="#0e86c8"/><rect x="4" y="23" width="2" height="2" fill="#0e86c8"/><path d="M8 9.4h6M8 14.3h11M11.3 17.5h7.5M11.3 20.5h7.5M8 24.5h11" stroke="#8a8a8a" stroke-width="1.1"/><rect x="21" y="0" width="10" height="13" rx="2" fill="#12597d"/><rect x="24.8" y="2" width="2.2" height="2" fill="#fff"/><path d="M23.5 5.5h3.5v4.5h1.3v1.2h-4.8v-1.2h1.3v-3.3h-1.3z" fill="#fff"/></svg>
<svg style="position:absolute;left:1853px;top:72px;" width="31" height="32" viewBox="0 0 31 32"><g fill="none" stroke="#6b6b6b" stroke-width="2.2"><rect x="0.5" y="-3.5" width="12" height="7" rx="3.5" transform="translate(6 25) rotate(-45) translate(-6.5 0)"/><rect x="0.5" y="-3.5" width="12" height="7" rx="3.5" transform="translate(13.9 16.9) rotate(-45) translate(-6.5 0)"/></g><path d="M0.5 30.5l2.5-2.5M18.5 10.5c1-1.5 1.2-3 3-5" stroke="#6b6b6b" stroke-width="1.6" fill="none"/><path d="M4 23.5l3.5 3M11.5 15.5l3.5 3" stroke="#fff" stroke-width="1.2"/><rect x="20" y="1" width="10" height="14" rx="2" fill="#12597d"/><rect x="23.8" y="3.2" width="2.2" height="2" fill="#fff"/><path d="M22.5 6.8h3.5v5h1.3v1.2h-4.8v-1.2h1.3v-3.8h-1.3z" fill="#fff"/></svg>
<svg style="position:absolute;left:16px;top:12px;" width="17" height="17" viewBox="0 0 17 17"><path d="M0.5 3.5L3.5 0.5H15.9L12.6 3.5Z" fill="#fff6e2" stroke="#c9a45c" stroke-width="0.9"/><path d="M12.6 3.5L15.9 0.5V12.5L12.6 15.8Z" fill="#e3c98e" stroke="#c9a45c" stroke-width="0.9"/><path d="M0.5 3.5H12.6V15.8H0.5Z" fill="#fde8bd" stroke="#c9a45c" stroke-width="0.9"/><path d="M5.3 3.3L8.3 0.5H15.9L12.2 3.3Z" fill="#eefafe" stroke="#5aaed3" stroke-width="0.8"/><path d="M12.2 3.3L15.9 0.5V7.4L12.2 10.8Z" fill="#79bcd9" stroke="#1a6f9a" stroke-width="0.9"/><path d="M5.3 3.3H12.2V10.8H5.3Z" fill="#aee8f8" stroke="#4aa3cc" stroke-width="0.9"/></svg>
<div style="position:absolute;left:36px;top:8px;width:1px;height:24px;background:#d5d8db"></div>
<svg style="position:absolute;left:45px;top:12px;" width="14" height="17" viewBox="0 0 14 17"><defs><linearGradient id="nd" x1="0" y1="0" x2="1" y2="1"><stop offset="0.45" stop-color="#fff"/><stop offset="1" stop-color="#cddfe8"/></linearGradient></defs><path d="M0.6 0.6h7.8l4.2 4.2v10.6h-12z" fill="url(#nd)" stroke="#8a8a8a" stroke-width="1.1"/><path d="M8.4 0.6v4.2h4.2" fill="#cfe6f2" stroke="#8a8a8a" stroke-width="1"/></svg>
<svg style="position:absolute;left:67px;top:12px;" width="16" height="16" viewBox="0 0 16 16"><path d="M0.5 4.5h5l1 1.5h6v3h-9l-3 6z" fill="#dcc08a" stroke="#b38d4a"/><path d="M0.5 14.5l3-6h12l-3 6z" fill="#fde9c4" stroke="#c49a50"/><path d="M8 4c1-2.5 3.5-3 5.5-2" fill="none" stroke="#333" stroke-width="1.4"/><path d="M12 0l4 2-3.5 2.5z" fill="#333"/></svg>
<svg style="position:absolute;left:92px;top:12px;" width="16" height="16" viewBox="0 0 16 16"><path d="M0.5 0.5h14v15h-14z" fill="#666" stroke="#555"/><path d="M2.5 0.5h10v7h-10z" fill="#f5f5f5"/><path d="M4 11h7v4.5h-7z" fill="#d6eef8"/><path d="M5.5 12h1.5v3h-1.5z" fill="#555"/></svg>
<svg style="position:absolute;left:115px;top:12px;" width="17" height="17" viewBox="0 0 17 17"><path d="M0.5 5.5h9.5v10h-9.5z" fill="#eaf9fe" stroke="#b4b4b4"/><path d="M10 5.5l3.8-3.8v9.8l-3.8 4z" fill="#6fb3d1"/><path d="M0.5 5.5l3-4 3 4 2-3 1.5 3" fill="none" stroke="#333" stroke-width="1" stroke-dasharray="1 0.6"/><path d="M4.5 0.5h11.3M12.5 0.5v5.5" stroke="#9a9a9a" stroke-width="1"/><path d="M11.5 6h4.3" stroke="#333" stroke-width="1.2"/><path d="M13 1h2.8v4.5H13z" fill="#e8eef2"/></svg>
<svg style="position:absolute;left:139px;top:12px;" width="18" height="17" viewBox="0 0 18 17"><defs><linearGradient id="pen" x1="0" y1="0" x2="1" y2="1"><stop offset="0" stop-color="#f4f0e8"/><stop offset="1" stop-color="#8a8a8a"/></linearGradient><radialGradient id="rub" cx="0.4" cy="0.35" r="0.6"><stop offset="0" stop-color="#e0a0a0"/><stop offset="0.5" stop-color="#b03a30"/><stop offset="1" stop-color="#7a1a14"/></radialGradient></defs><path d="M0.5 0.5h7.5l3.8 3.8v10.3h-11.3z" fill="#f6fafc" stroke="#8f8f8f"/><path d="M8 0.5v3.8h3.8" fill="#d3e6f0" stroke="#8f8f8f"/><path d="M4.8 6.7h4M6.5 8.6h2.3M2.3 12h2" stroke="#4a9bc8" stroke-width="1"/><path d="M16.2 3.6L11.5 8.5 14.5 11.3 17 8.7z" fill="url(#pen)"/><path d="M9 10.8l2.6-2.5 3 3-2.6 2.6z" fill="url(#pen)"/><path d="M16.2 3.6l-7 7" stroke="#555" stroke-width="0.8" stroke-dasharray="1 0.7"/><path d="M9.2 10.4l3.2 3.2-1.6 1.6c-1 1-2.6 1-3.4 0.1-0.9-0.9-0.9-2.4 0.1-3.4z" fill="url(#rub)"/></svg>
<svg style="position:absolute;left:162px;top:12px;" width="18" height="17" viewBox="0 0 18 17"><defs><linearGradient id="pen" x1="0" y1="0" x2="1" y2="1"><stop offset="0" stop-color="#f4f0e8"/><stop offset="1" stop-color="#8a8a8a"/></linearGradient><radialGradient id="rub" cx="0.4" cy="0.35" r="0.6"><stop offset="0" stop-color="#e0a0a0"/><stop offset="0.5" stop-color="#b03a30"/><stop offset="1" stop-color="#7a1a14"/></radialGradient></defs><path d="M0.5 0.5h7.5l3.8 3.8v10.3h-11.3z" fill="#f2f2f2" stroke="#cfcfcf"/><path d="M8 0.5v3.8h3.8" fill="#f4f4f4" stroke="#cfcfcf"/><path d="M16.2 3.6L11.5 8.5 14.5 11.3 17 8.7z" fill="url(#pen)"/><path d="M9 10.8l2.6-2.5 3 3-2.6 2.6z" fill="url(#pen)"/><path d="M16.2 3.6l-7 7" stroke="#555" stroke-width="0.8" stroke-dasharray="1 0.7"/><path d="M9.2 10.4l3.2 3.2-1.6 1.6c-1 1-2.6 1-3.4 0.1-0.9-0.9-0.9-2.4 0.1-3.4z" fill="url(#rub)"/></svg>
<svg style="position:absolute;left:188px;top:14px;" width="16" height="13" viewBox="0 0 16 13"><path d="M4.5 5.5C6 3 8.5 2 10.5 2.5 13.5 3.2 15 6 14.5 8.5 14 11 12 12.3 10 12.5" fill="none" stroke="#b0b0b0" stroke-width="2.2"/><path d="M0.5 2.5L6.5 8.5 7.5 1.5Z" fill="#b0b0b0"/></svg>
<svg style="position:absolute;left:210px;top:18px;" width="6" height="4" viewBox="0 0 6 4"><path d="M0 0H6L3.0 4Z" fill="#b5b5b5"/></svg>
<svg style="position:absolute;left:226px;top:14px;" width="16" height="13" viewBox="0 0 16 13"><path d="M11.5 5.5C10 3 7.5 2 5.5 2.5 2.5 3.2 1 6 1.5 8.5 2 11 4 12.3 6 12.5" fill="none" stroke="#b0b0b0" stroke-width="2.2"/><path d="M15.5 2.5L9.5 8.5 8.5 1.5Z" fill="#b0b0b0"/></svg>
<svg style="position:absolute;left:248px;top:18px;" width="6" height="4" viewBox="0 0 6 4"><path d="M0 0H6L3.0 4Z" fill="#b5b5b5"/></svg>
<svg style="position:absolute;left:263px;top:12px;" width="10" height="17" viewBox="0 0 10 17"><rect x="5" y="0.5" width="3" height="3" fill="#fff" stroke="#aaa"/><rect x="5" y="6.5" width="3" height="3.5" fill="#fff" stroke="#333" stroke-width="1.1"/><rect x="5" y="13" width="3" height="3" fill="#fff" stroke="#aaa"/><path d="M6.5 3.5v3M6.5 10v3" stroke="#aaa"/><path d="M0 6.5h3l-1.5 2z" fill="#222"/></svg>
<svg style="position:absolute;left:287px;top:12px;" width="16" height="16" viewBox="0 0 16 16"><path d="M0.6 1.2h3.4v3.4h-3.4z" fill="#fff" stroke="#8a8a8a" stroke-width="0.9"/><path d="M0.6 1.2h3.4v3.4" fill="none" stroke="#2aa0dc" stroke-width="1.1"/><path d="M0.6 6.199999999999999h3.4v3.4h-3.4z" fill="#fff" stroke="#8a8a8a" stroke-width="0.9"/><path d="M0.6 6.199999999999999h3.4v3.4" fill="none" stroke="#2aa0dc" stroke-width="1.1"/><path d="M0.6 11.2h3.4v3.4h-3.4z" fill="#fff" stroke="#8a8a8a" stroke-width="0.9"/><path d="M0.6 11.2h3.4v3.4" fill="none" stroke="#2aa0dc" stroke-width="1.1"/><path d="M5.2 10.4h8.7M5.2 12.5h8.7M5.2 14.5h7.8" stroke="#808080" stroke-width="1"/><path d="M7.4 1.8L10 4.8H8.4C8.5 6.4 9.2 7.3 10.4 7.8 8.2 8.3 6.8 7 6.6 4.8H4.9Z" fill="#0f5a80"/><path d="M12.6 6L10 3.1H11.6C11.5 1.6 10.7 0.8 9.6 0.3 11.8-0.1 13.2 1 13.4 3.1H15Z" fill="#0f5a80"/></svg>
<svg style="position:absolute;left:311px;top:12px;" width="16" height="17" viewBox="0 0 16 17"><path d="M0.5 1.5h6v5h-6zM8.5 1.5h6v5h-6zM0.5 9.5h6v6h-6z" fill="#fff" stroke="#aaa"/><path d="M4.5 5.5h8v6h-8z" fill="#e5f2f8" stroke="#1f6f96" stroke-width="1.3"/></svg>
<svg style="position:absolute;left:334px;top:19px;" width="6" height="4" viewBox="0 0 6 4"><path d="M0 0H6L3.0 4Z" fill="#8a8a8a"/></svg>
<svg style="position:absolute;left:349px;top:12px;" width="17" height="17" viewBox="0 0 17 17"><path d="M0.5 0.5h12v11h-12z" fill="#f4f4f4" stroke="#c8c8c8"/><path d="M3.5 3.5h13v13h-13z" fill="#eef3f6" stroke="#1f6f96" stroke-width="1.3"/><path d="M6 10l2.5 2.5 5-5.5" fill="none" stroke="#1f6f96" stroke-width="1.8"/></svg>
<svg style="position:absolute;left:376px;top:15px;" width="12" height="11" viewBox="0 0 12 11"><path d="M1 1.5h3l2 2.5 2-2.5h3l-3.5 4 3.5 4h-3l-2-2.5-2 2.5h-3l3.5-4z" fill="#fff" stroke="#333" stroke-width="1.1" stroke-linejoin="round"/></svg>
<div style="position:absolute;left:395px;top:8px;width:1px;height:24px;background:#d5d8db"></div>
<svg style="position:absolute;left:403px;top:17px;" width="8" height="7" viewBox="0 0 8 7"><path d="M0 0h8" stroke="#333" stroke-width="1.2"/><path d="M0 2h8l-4 4.5z" fill="#333"/></svg>
<svg style="position:absolute;left:1841px;top:20px;" width="9" height="4" viewBox="0 0 9 4"><rect x="0.5" y="0.5" width="8" height="3" fill="none" stroke="#a9abad"/></svg>
<svg style="position:absolute;left:1867px;top:15px;" width="11" height="9" viewBox="0 0 11 9"><rect x="0.5" y="0.5" width="10" height="8" fill="none" stroke="#a9abad"/><rect x="2.5" y="3.5" width="6" height="2" fill="none" stroke="#a9abad"/></svg>
<svg style="position:absolute;left:1893px;top:15px;" width="12" height="9" viewBox="0 0 12 9"><path d="M0.8 0.5h3l2.2 2.6 2.2-2.6h3l-3.7 4 3.7 4h-3l-2.2-2.6-2.2 2.6h-3l3.7-4z" fill="#fff" stroke="#a9abad" stroke-width="0.9" stroke-linejoin="round"/></svg>
<svg style="position:absolute;left:1812px;top:43px;" width="12" height="7" viewBox="0 0 12 7"><path d="M1 6l5-5 5 5h-2.5l-2.5-2.5-2.5 2.5z" fill="#fff" stroke="#333" stroke-width="0.9" stroke-linejoin="round"/></svg>
<svg style="position:absolute;left:1831px;top:42px;" width="15" height="15" viewBox="0 0 15 15"><circle cx="9" cy="6" r="4.8" fill="#eef5fa" stroke="#333" stroke-width="1.8"/><path d="M5.5 9.5l-4 4" stroke="#333" stroke-width="2.6" stroke-linecap="round"/></svg>
<svg style="position:absolute;left:1854px;top:40px;" width="17" height="17" viewBox="0 0 17 17"><circle cx="8" cy="8" r="8" fill="#3a3a3c"/><path d="M2.5 6.2L8 3.5l5.5 2.7L8 9z" fill="#fff"/><path d="M4.5 8.2v2.8c1.5 1.5 5.5 1.5 7 0V8.2L8 10z" fill="#fff"/></svg>
<svg style="position:absolute;left:1877px;top:46px;" width="7" height="4" viewBox="0 0 7 4"><path d="M0 0H7L3.5 4Z" fill="#8a8a8a"/></svg>
<svg style="position:absolute;left:1892px;top:41px;" width="16" height="16" viewBox="0 0 16 16"><circle cx="8" cy="8" r="8" fill="#353537"/><path d="M5.3 6c0-1.8 1.2-2.8 2.8-2.8s2.8 1 2.8 2.6c0 2-2.4 2.2-2.4 4" fill="none" stroke="#fff" stroke-width="2"/><rect x="7" y="11.2" width="2.2" height="2.2" fill="#fff"/></svg>
<svg style="position:absolute;left:0px;top:0px;pointer-events:none" width="1919" height="1038" viewBox="0 0 1919 1038"><polygon points="875,460.5 1523.5,465.5 1409,677.5 760,672" fill="#818dc8"/><defs>
<linearGradient id="noseUp" gradientUnits="userSpaceOnUse" x1="1010" y1="474" x2="1018" y2="512"><stop offset="0" stop-color="#7d88c2"/><stop offset="0.75" stop-color="#8995d6"/><stop offset="1" stop-color="#8f9be0"/></linearGradient>
<linearGradient id="noseLo" gradientUnits="userSpaceOnUse" x1="1020" y1="509" x2="1026" y2="530"><stop offset="0" stop-color="#8a96d9"/><stop offset="0.3" stop-color="#727cb1"/><stop offset="1" stop-color="#6c76a9"/></linearGradient>
<linearGradient id="capg" x1="0" y1="0" x2="1" y2="0"><stop offset="0" stop-color="#474d72"/><stop offset="0.25" stop-color="#3d4262"/><stop offset="1" stop-color="#3a3e5c"/></linearGradient>
</defs><path d="M961.5 517 C961 511 963.5 506 967.5 503.4 L989.1 491.9 L1060.6 461.6 L1084.8 453.5 L1108.4 447.4 C1102 455 1098 461 1094 469 C1089 479 1086 489 1084.8 500.7 L1085 512 L966 522 Z" fill="url(#noseUp)"/><path d="M966 518 L1085 510 L1085 508 C1086 527 1089 545 1095 558.7 L1084.8 572.1 L1051 568 L1024.2 561.4 L977 534.4 C970 530 963 526 961.5 517 Z" fill="url(#noseLo)"/><path d="M1108.4 447.4 L1115.2 452.1 L1126.6 512.8 L1126.6 526.3 L1117.2 547.9 L1095 558.7 C1089 545 1086 525 1084.8 500.7 C1086 489 1089 479 1094 469 C1098 461 1102 455 1108.4 447.4Z" fill="url(#capg)"/><path d="M989.1 491.9 L1060.6 461.6 L1084.8 453.5 L1108.4 447.4" fill="none" stroke="#737db8" stroke-width="0.8" opacity="0.5"/><defs>
<linearGradient id="treadL" x1="0" y1="0.3" x2="1" y2="0.6"><stop offset="0" stop-color="#8892d0"/><stop offset="0.45" stop-color="#7e89c4"/><stop offset="0.75" stop-color="#596090"/><stop offset="1" stop-color="#41466e"/></linearGradient>
<radialGradient id="torusL" cx="0.5" cy="0.5" r="0.5"><stop offset="0.62" stop-color="#59629a"/><stop offset="0.7" stop-color="#7a85c4"/><stop offset="0.8" stop-color="#8d98d8"/><stop offset="0.92" stop-color="#8590cf"/><stop offset="1" stop-color="#6c76b0"/></radialGradient>
<linearGradient id="riminL" x1="0.2" y1="0" x2="0.6" y2="1"><stop offset="0" stop-color="#4a5282"/><stop offset="0.45" stop-color="#5f69a0"/><stop offset="1" stop-color="#909bdb"/></linearGradient>
</defs><g transform="rotate(-8 1121.5 607.5)"><ellipse cx="1133.5" cy="589.5" rx="46" ry="40.5" fill="url(#treadL)"/><path d="M1081.83 587.00 L1093.83 569.00 L1173.17 610.00 L1161.17 628.00Z" fill="url(#treadL)"/><ellipse cx="1121.5" cy="607.5" rx="46" ry="40.5" fill="url(#torusL)"/><path d="M1105.95 578.14 A36.80 32.40 0 0 1 1137.05 578.14" fill="none" stroke="#c5cdf8" stroke-width="3" stroke-linecap="round" opacity="0.9"/><path d="M1097.85 582.68 A36.80 32.40 0 0 1 1145.15 582.68" fill="none" stroke="#a9b3ec" stroke-width="4" stroke-linecap="round" opacity="0.45"/><path d="M1134.09 637.95 A36.80 32.40 0 0 1 1111.98 638.80" fill="none" stroke="#c5cdf8" stroke-width="3" stroke-linecap="round" opacity="0.8"/><path d="M1142.61 634.04 A36.80 32.40 0 0 1 1100.39 634.04" fill="none" stroke="#a9b3ec" stroke-width="4" stroke-linecap="round" opacity="0.4"/><ellipse cx="1121.5" cy="607.5" rx="30.48" ry="27.015" fill="none" stroke="#6a74ae" stroke-width="1.2"/><ellipse cx="1121.5" cy="607.5" rx="28.98" ry="25.515" fill="url(#riminL)" stroke="#4e5787" stroke-width="1"/><path d="M1131.2 606.4 L1148.6 610.5" stroke="#454d7a" stroke-width="1.1"/><path d="M1130.4 605.7 L1147.8 609.8" stroke="#8a95d6" stroke-width="1.6"/><path d="M1131.2 606.4 L1147.6 615.0" stroke="#454d7a" stroke-width="1.1"/><path d="M1130.4 605.7 L1146.8 614.3" stroke="#8a95d6" stroke-width="1.6"/><path d="M1129.4 609.6 L1142.1 623.5" stroke="#454d7a" stroke-width="1.1"/><path d="M1128.6 608.9 L1141.3 622.8" stroke="#8a95d6" stroke-width="1.6"/><path d="M1129.4 609.6 L1138.2 626.6" stroke="#454d7a" stroke-width="1.1"/><path d="M1128.6 608.9 L1137.4 625.9" stroke="#8a95d6" stroke-width="1.6"/><path d="M1126.0 611.2 L1127.9 630.7" stroke="#454d7a" stroke-width="1.1"/><path d="M1125.2 610.5 L1127.1 630.0" stroke="#8a95d6" stroke-width="1.6"/><path d="M1126.0 611.2 L1122.7 631.2" stroke="#454d7a" stroke-width="1.1"/><path d="M1125.2 610.5 L1121.9 630.5" stroke="#8a95d6" stroke-width="1.6"/><path d="M1122.3 610.4 L1111.6 629.3" stroke="#454d7a" stroke-width="1.1"/><path d="M1121.5 609.7 L1110.8 628.6" stroke="#8a95d6" stroke-width="1.6"/><path d="M1122.3 610.4 L1107.0 627.0" stroke="#454d7a" stroke-width="1.1"/><path d="M1121.5 609.7 L1106.2 626.3" stroke="#8a95d6" stroke-width="1.6"/><path d="M1119.8 607.7 L1099.4 619.8" stroke="#454d7a" stroke-width="1.1"/><path d="M1119.0 607.0 L1098.6 619.1" stroke="#8a95d6" stroke-width="1.6"/><path d="M1119.8 607.7 L1097.2 615.6" stroke="#454d7a" stroke-width="1.1"/><path d="M1119.0 607.0 L1096.4 614.9" stroke="#8a95d6" stroke-width="1.6"/><path d="M1119.4 604.0 L1096.0 605.9" stroke="#454d7a" stroke-width="1.1"/><path d="M1118.6 603.3 L1095.2 605.2" stroke="#8a95d6" stroke-width="1.6"/><path d="M1119.4 604.0 L1097.0 601.4" stroke="#454d7a" stroke-width="1.1"/><path d="M1118.6 603.3 L1096.2 600.7" stroke="#8a95d6" stroke-width="1.6"/><path d="M1121.2 600.8 L1102.5 592.9" stroke="#454d7a" stroke-width="1.1"/><path d="M1120.4 600.1 L1101.7 592.2" stroke="#8a95d6" stroke-width="1.6"/><path d="M1121.2 600.8 L1106.4 589.8" stroke="#454d7a" stroke-width="1.1"/><path d="M1120.4 600.1 L1105.6 589.1" stroke="#8a95d6" stroke-width="1.6"/><path d="M1124.6 599.2 L1116.7 585.7" stroke="#454d7a" stroke-width="1.1"/><path d="M1123.8 598.5 L1115.9 585.0" stroke="#8a95d6" stroke-width="1.6"/><path d="M1124.6 599.2 L1121.9 585.2" stroke="#454d7a" stroke-width="1.1"/><path d="M1123.8 598.5 L1121.1 584.5" stroke="#8a95d6" stroke-width="1.6"/><path d="M1128.3 600.0 L1133.0 587.1" stroke="#454d7a" stroke-width="1.1"/><path d="M1127.5 599.3 L1132.2 586.4" stroke="#8a95d6" stroke-width="1.6"/><path d="M1128.3 600.0 L1137.6 589.4" stroke="#454d7a" stroke-width="1.1"/><path d="M1127.5 599.3 L1136.8 588.7" stroke="#8a95d6" stroke-width="1.6"/><path d="M1130.8 602.7 L1145.2 596.6" stroke="#454d7a" stroke-width="1.1"/><path d="M1130.0 602.0 L1144.4 595.9" stroke="#8a95d6" stroke-width="1.6"/><path d="M1130.8 602.7 L1147.4 600.8" stroke="#454d7a" stroke-width="1.1"/><path d="M1130.0 602.0 L1146.6 600.1" stroke="#8a95d6" stroke-width="1.6"/><circle cx="1124.5" cy="604.5" r="6.5" fill="#8893d4" stroke="#4f5888" stroke-width="1.2"/><circle cx="1125.0" cy="605.0" r="3.2" fill="#6d77b2"/></g><defs>
<linearGradient id="treadU" x1="0" y1="0.3" x2="1" y2="0.6"><stop offset="0" stop-color="#8892d0"/><stop offset="0.45" stop-color="#7e89c4"/><stop offset="0.75" stop-color="#596090"/><stop offset="1" stop-color="#41466e"/></linearGradient>
<radialGradient id="torusU" cx="0.5" cy="0.5" r="0.5"><stop offset="0.62" stop-color="#59629a"/><stop offset="0.7" stop-color="#7a85c4"/><stop offset="0.8" stop-color="#8d98d8"/><stop offset="0.92" stop-color="#8590cf"/><stop offset="1" stop-color="#6c76b0"/></radialGradient>
<linearGradient id="riminU" x1="0.2" y1="0" x2="0.6" y2="1"><stop offset="0" stop-color="#4a5282"/><stop offset="0.45" stop-color="#5f69a0"/><stop offset="1" stop-color="#909bdb"/></linearGradient>
</defs><g transform="rotate(-6 1199 466.5)"><ellipse cx="1208" cy="449.0" rx="49" ry="39.5" fill="url(#treadU)"/><path d="M1156.92 450.54 L1163.18 433.04 L1252.82 464.96 L1241.08 482.46Z" fill="url(#treadU)"/><ellipse cx="1199" cy="466.5" rx="46" ry="39.5" fill="url(#torusU)"/><path d="M1183.45 437.86 A36.80 31.60 0 0 1 1214.55 437.86" fill="none" stroke="#c5cdf8" stroke-width="3" stroke-linecap="round" opacity="0.9"/><path d="M1175.35 442.29 A36.80 31.60 0 0 1 1222.65 442.29" fill="none" stroke="#a9b3ec" stroke-width="4" stroke-linecap="round" opacity="0.45"/><path d="M1211.59 496.19 A36.80 31.60 0 0 1 1189.48 497.02" fill="none" stroke="#c5cdf8" stroke-width="3" stroke-linecap="round" opacity="0.8"/><path d="M1220.11 492.39 A36.80 31.60 0 0 1 1177.89 492.39" fill="none" stroke="#a9b3ec" stroke-width="4" stroke-linecap="round" opacity="0.4"/><ellipse cx="1199" cy="466.5" rx="30.48" ry="26.385" fill="none" stroke="#6a74ae" stroke-width="1.2"/><ellipse cx="1199" cy="466.5" rx="28.98" ry="24.885" fill="url(#riminU)" stroke="#4e5787" stroke-width="1"/><ellipse cx="1201" cy="457.5" rx="16" ry="12.5" fill="#6a74ad"/><path d="M1182.0 452.7 L1187.1 446.4 L1194.1 451.9 L1191.5 455.1Z" fill="#f7f7fa"/><path d="M1189.8 444.6 L1198.2 442.2 L1199.6 449.8 L1195.4 451.1Z" fill="#f7f7fa"/><path d="M1182.2 462.8 L1181.1 455.9 L1191.1 456.7 L1191.6 460.2Z" fill="#dfe2f2"/><ellipse cx="1202" cy="458.5" rx="9" ry="7" fill="#737dba"/><path d="M1205.0 462.7 L1209.5 468.8" stroke="#4e5787" stroke-width="1.3"/><path d="M1201.7 463.5 L1202.5 470.5" stroke="#4e5787" stroke-width="1.3"/><path d="M1198.3 463.1 L1195.2 469.7" stroke="#4e5787" stroke-width="1.3"/><path d="M1195.3 461.7 L1189.0 466.7" stroke="#4e5787" stroke-width="1.3"/></g><rect x="1226" y="426" width="7" height="14" fill="#fff"/><path d="M1226.8 429.6h4.8l-4.8 6.8h4.8" fill="none" stroke="#6e6e6e" stroke-width="0.9"/><rect x="1242" y="436" width="6.6" height="13.8" fill="#fff"/><path d="M1242.6 437.4l2.6 3.6 2.6-3.6M1245.2 441v6" fill="none" stroke="#6e6e6e" stroke-width="0.9"/><rect x="1246.5" y="449.7" width="8.2" height="5.5" fill="#fff"/><rect x="1263.7" y="463.5" width="8.2" height="5.5" fill="#fff"/><path d="M1263.4 458l6.6 7.6M1270 458l-6.6 7.6" fill="none" stroke="#5e5e5e" stroke-width="0.9"/><path d="M1205 459.6 L1220 459.7" stroke="#b8773a" stroke-width="1.2"/><path d="M1230.6 430.6 L1242.7 488" stroke="#b8773a" stroke-width="1.2"/><path d="M1226 479 L1247.6 440" stroke="#b8773a" stroke-width="1.2"/><path d="M1220 459.7 L1268.7 460.3" stroke="#b8773a" stroke-width="1.2"/></svg>
<div class="t" style="left:1247.00px;top:440.65px;font-size:14px;line-height:14px;font-weight:400;color:#9a6a36;letter-spacing:0.86px;transform:scaleY(1.18);transform-origin:0 12px">ACS0 NAL_DESIGN_REFERANCESPACE</div>
<div style="position:absolute;left:8px;top:182px;width:30px;height:30px;background:#fafafa;border:1px solid #c3c7cb;border-bottom:none;border-radius:2px 2px 0 0;box-sizing:border-box"></div>
<div style="position:absolute;left:37px;top:182px;width:31px;height:29px;background:#eef0f2;border:1px solid #c3c7cb;border-bottom:none;border-radius:2px 2px 0 0;box-sizing:border-box"></div>
<div style="position:absolute;left:67px;top:182px;width:31px;height:29px;background:#eef0f2;border:1px solid #c3c7cb;border-bottom:none;border-radius:2px 2px 0 0;box-sizing:border-box"></div>
<div style="position:absolute;left:37px;top:211px;width:254px;height:1px;background:#c3c7cb"></div>
<div style="position:absolute;left:8px;top:211px;width:1px;height:776px;background:#c3c7cb"></div>
<div style="position:absolute;left:9px;top:212px;width:1px;height:773px;background:#ffffff"></div>
<div style="position:absolute;left:289px;top:211px;width:3px;height:776px;background:#c7cbcf"></div>
<div style="position:absolute;left:8px;top:985px;width:284px;height:2px;background:#c7cbcf"></div>
<div style="position:absolute;left:9px;top:268px;width:280px;height:1px;background:#c9cdd1"></div>
<svg style="position:absolute;left:17px;top:187px;" width="13" height="19" viewBox="0 0 13 19"><rect x="0.5" y="0.5" width="3.5" height="3.5" fill="#fff" stroke="#333" stroke-width="1.1"/><rect x="0.5" y="8" width="3.5" height="3.5" fill="#fff" stroke="#333" stroke-width="1.1"/><rect x="0.5" y="15" width="3.5" height="3.5" fill="#fff" stroke="#333" stroke-width="1.1"/><rect x="8.5" y="8" width="3.5" height="3.5" fill="#fff" stroke="#333" stroke-width="1.1"/><path d="M2.25 4v4M2.25 11.5V15M4 9.75h4.5" stroke="#333" stroke-width="0.9"/></svg>
<svg style="position:absolute;left:43px;top:187px;" width="21" height="21" viewBox="0 0 21 21"><defs><linearGradient id="fldg" x1="0" y1="0" x2="1" y2="1"><stop offset="0.2" stop-color="#ffffff"/><stop offset="1" stop-color="#fde3aa"/></linearGradient></defs><rect x="2.3" y="1" width="6.3" height="3" rx="1.3" fill="#d9bd7c" stroke="#c2a05a" stroke-width="0.7"/><rect x="1.6" y="3" width="12.6" height="8.7" rx="1.3" fill="url(#fldg)" stroke="#bd9a52" stroke-width="0.9"/><path d="M2.6 11.799999999999999h10.6" stroke="#9c7a3a" stroke-width="1"/><rect x="5.4" y="5" width="6.25" height="3" rx="1.3" fill="#d9bd7c" stroke="#c2a05a" stroke-width="0.7"/><rect x="4.7" y="7" width="12.5" height="8.7" rx="1.3" fill="url(#fldg)" stroke="#bd9a52" stroke-width="0.9"/><path d="M5.7 15.799999999999999h10.5" stroke="#9c7a3a" stroke-width="1"/><rect x="8.4" y="9" width="6.25" height="3" rx="1.3" fill="#d9bd7c" stroke="#c2a05a" stroke-width="0.7"/><rect x="7.7" y="11" width="12.5" height="8.7" rx="1.3" fill="url(#fldg)" stroke="#bd9a52" stroke-width="0.9"/><path d="M8.7 19.8h10.5" stroke="#9c7a3a" stroke-width="1"/></svg>
<svg style="position:absolute;left:73px;top:189px;" width="19" height="17" viewBox="0 0 19 17"><rect x="2.4" y="1" width="8.25" height="3" rx="1.3" fill="#d9bd7c" stroke="#c2a05a" stroke-width="0.7"/><rect x="1.7" y="3" width="16.5" height="12.9" rx="1.3" fill="url(#fldg)" stroke="#bd9a52" stroke-width="0.9"/><path d="M2.7 16.0h14.5" stroke="#9c7a3a" stroke-width="1"/><path d="M9.5 6v7M6 9.5h7" stroke="#145a82" stroke-width="1.2"/><circle cx="9.5" cy="9.5" r="1.6" fill="#145a82"/><circle cx="9.5" cy="9.5" r="0.6" fill="#fff"/><circle cx="7.4" cy="7.4" r="0.75" fill="#145a82"/><circle cx="11.6" cy="7.4" r="0.75" fill="#145a82"/><circle cx="7.4" cy="11.6" r="0.75" fill="#145a82"/><circle cx="11.6" cy="11.6" r="0.75" fill="#145a82"/></svg>
<div class="t" style="left:29.50px;top:219.68px;font-size:11.6px;line-height:11.6px;font-weight:700;color:#444752;transform:scaleX(0.9925);transform-origin:0 0;">Modellbaum</div>
<svg style="position:absolute;left:177px;top:216px;" width="17" height="21" viewBox="0 0 17 21"><path d="M0.5 2.5c1.5-2 6-2.5 9-1.5v3.5h-9z" fill="#6a6a72"/><path d="M3.5 4h4v16h-4z" fill="#d8b878" stroke="#a8874a" stroke-width="0.8"/><path d="M13 0.5v9" stroke="#555" stroke-width="1.4"/><path d="M11.3 9.5h3.4v10.5h-3.4z" fill="#d8b878" stroke="#a8874a" stroke-width="0.8"/></svg>
<svg style="position:absolute;left:203px;top:224px;" width="7" height="4" viewBox="0 0 7 4"><path d="M0 0H7L3.5 4Z" fill="#777"/></svg>
<svg style="position:absolute;left:220px;top:216px;" width="17" height="21" viewBox="0 0 17 21"><path d="M0.5 0.5h11l4.5 4.5v15h-15.5z" fill="#e8f2f7" stroke="#8c98a0"/><circle cx="4" cy="7" r="1.2" fill="none" stroke="#555" stroke-width="0.8"/><circle cx="4" cy="11" r="1.2" fill="none" stroke="#555" stroke-width="0.8"/><circle cx="4" cy="15" r="1.2" fill="none" stroke="#555" stroke-width="0.8"/><path d="M7 7h6M7 11h6M7 15h6" stroke="#555" stroke-width="1"/></svg>
<svg style="position:absolute;left:245px;top:224px;" width="7" height="4" viewBox="0 0 7 4"><path d="M0 0H7L3.5 4Z" fill="#777"/></svg>
<svg style="position:absolute;left:265px;top:216px;" width="21" height="21" viewBox="0 0 21 21"><rect x="0.5" y="0.5" width="3" height="3" fill="none" stroke="#c6c6c6"/><rect x="0.5" y="8.5" width="3" height="3" fill="none" stroke="#c6c6c6"/><rect x="0.5" y="16.5" width="3" height="3" fill="none" stroke="#c6c6c6"/><rect x="8.5" y="8.5" width="3" height="3" fill="none" stroke="#c6c6c6"/><path d="M6 1h4v14M12 1h4v14M18 1h2v14" fill="none" stroke="#d6d6d6"/><ellipse cx="15" cy="15" rx="5" ry="3" fill="none" stroke="#999" stroke-width="1.2"/><path d="M10 10l9 9" stroke="#777" stroke-width="1"/></svg>
<div style="position:absolute;left:13px;top:241px;width:181px;height:22px;background:#fff;border:1px solid #c9cdd1;box-sizing:border-box"></div>
<svg style="position:absolute;left:180px;top:248px;" width="9" height="8" viewBox="0 0 9 8"><path d="M0.5 0.5l8 7M8.5 0.5l-8 7" stroke="#666" stroke-width="1.1"/></svg>
<svg style="position:absolute;left:200px;top:250px;" width="7" height="4" viewBox="0 0 7 4"><path d="M0 0H7L3.5 4Z" fill="#777"/></svg>
<svg style="position:absolute;left:217px;top:245px;" width="17" height="15" viewBox="0 0 17 15"><defs><linearGradient id="bino" x1="0" x2="0" y1="0" y2="1"><stop offset="0" stop-color="#555"/><stop offset="0.6" stop-color="#9a9a9a"/><stop offset="1" stop-color="#222"/></linearGradient></defs><path d="M3 0.5h3.5v5h-3.5zM10.5 0.5h3.5v5h-3.5z" fill="#444"/><path d="M1 6l2-2h4v11h-6.5zM16 6l-2-2h-4v11h6.5z" fill="url(#bino)"/><path d="M7 6h3v6h-3z" fill="#444"/></svg>
<svg style="position:absolute;left:243px;top:245px;" width="16" height="15" viewBox="0 0 16 15"><path d="M0.5 0.5h15l-5.5 7v7h-4v-7z" fill="#fff" stroke="#bcbcbc"/></svg>
<svg style="position:absolute;left:271px;top:246px;" width="12" height="11" viewBox="0 0 12 11"><path d="M6 0.5v10M0.5 5.5h11" stroke="#8c8c8c" stroke-width="2.6"/></svg>
<svg style="position:absolute;left:20px;top:277px;" width="15" height="16" viewBox="0 0 15 16"><path d="M0.5 3.2L2.6 1H13.9L11.8 3.2Z" fill="#fff6e2" stroke="#c9a45c" stroke-width="0.9"/><path d="M11.8 3.2L13.9 1V12.8L11.8 14.8Z" fill="#e3c98e" stroke="#c9a45c" stroke-width="0.9"/><path d="M0.5 3.2H11.8V14.8H0.5Z" fill="#fde8bd" stroke="#c9a45c" stroke-width="0.9"/><path d="M4.3 3.2L6.2 1H13.9L11.4 3.2Z" fill="#eefafe" stroke="#5aaed3" stroke-width="0.8"/><path d="M11.4 3.2L13.9 1V8.6L11.4 10.7Z" fill="#79bcd9" stroke="#1a6f9a" stroke-width="0.9"/><path d="M4.3 3.2H11.4V10.7H4.3Z" fill="#aee8f8" stroke="#4aa3cc" stroke-width="0.9"/></svg>
<div class="t" style="left:40.50px;top:280.04px;font-size:10px;line-height:10px;font-weight:400;color:#3a3a3a;transform:scaleX(0.9951);transform-origin:0 0;">ORIGINAL_DESIGN_REFERANCESPACE.ASM</div>
<div style="position:absolute;left:960px;top:176px;width:284px;height:28px;background:#fff;border:1px solid #c3c7cb;box-sizing:border-box"></div>
<div style="position:absolute;left:961px;top:177px;width:5px;height:26px;background:#e6e8eb"></div>
<div style="position:absolute;left:1239px;top:177px;width:4px;height:26px;background:#e6e8eb"></div>
<div style="position:absolute;left:965px;top:177px;width:1px;height:26px;background:#d0d3d6"></div>
<div style="position:absolute;left:992px;top:177px;width:1px;height:26px;background:#d0d3d6"></div>
<div style="position:absolute;left:1019px;top:177px;width:1px;height:26px;background:#d0d3d6"></div>
<div style="position:absolute;left:1046px;top:177px;width:1px;height:26px;background:#d0d3d6"></div>
<div style="position:absolute;left:1073px;top:177px;width:1px;height:26px;background:#d0d3d6"></div>
<div style="position:absolute;left:1101px;top:177px;width:1px;height:26px;background:#d0d3d6"></div>
<div style="position:absolute;left:1129px;top:177px;width:1px;height:26px;background:#d0d3d6"></div>
<div style="position:absolute;left:1156px;top:177px;width:1px;height:26px;background:#d0d3d6"></div>
<div style="position:absolute;left:1184px;top:177px;width:1px;height:26px;background:#d0d3d6"></div>
<div style="position:absolute;left:1211px;top:177px;width:1px;height:26px;background:#d0d3d6"></div>
<div style="position:absolute;left:1238px;top:177px;width:1px;height:26px;background:#d0d3d6"></div>
<svg style="position:absolute;left:971px;top:182px;" width="16" height="17" viewBox="0 0 16 17"><path d="M0.5 0.5h14v12h-14z" fill="#fff" stroke="#9a9a9a"/><circle cx="7" cy="7" r="4.3" fill="#e7f6fc" stroke="#2b8ab9" stroke-width="1.1"/><path d="M10 10l4 4.5" stroke="#888" stroke-width="2.4" stroke-linecap="round"/><path d="M10 10l4 4.5" stroke="#eee" stroke-width="1"/></svg>
<svg style="position:absolute;left:998px;top:182px;" width="16" height="17" viewBox="0 0 16 17"><circle cx="6" cy="6" r="5.3" fill="#eef8fc" stroke="#2b8ab9" stroke-width="1.1"/><path d="M6 3v6M3 6h6" stroke="#1e6e99" stroke-width="2"/><path d="M10 10l4.5 4.5" stroke="#888" stroke-width="2.4" stroke-linecap="round"/><path d="M10 10l4.5 4.5" stroke="#eee" stroke-width="1"/></svg>
<svg style="position:absolute;left:1025px;top:182px;" width="16" height="17" viewBox="0 0 16 17"><circle cx="6" cy="6" r="5.3" fill="#eef8fc" stroke="#2b8ab9" stroke-width="1.1"/><path d="M3 6h6" stroke="#1e6e99" stroke-width="2"/><path d="M10 10l4.5 4.5" stroke="#888" stroke-width="2.4" stroke-linecap="round"/><path d="M10 10l4.5 4.5" stroke="#eee" stroke-width="1"/></svg>
<svg style="position:absolute;left:1052px;top:182px;" width="16" height="16" viewBox="0 0 16 16"><defs><linearGradient id="vt4" x1="0" y1="0" x2="1" y2="1"><stop offset="0.3" stop-color="#e8f6fb"/><stop offset="1" stop-color="#5aaed3"/></linearGradient></defs><path d="M0.5 0.5h15v15h-15z" fill="url(#vt4)" stroke="#8a8a8a"/><path d="M0.5 1h15" stroke="#777" stroke-width="1.4"/><path d="M3 14.5L13 5" stroke="#1a5f86" stroke-width="1.6"/></svg>
<svg style="position:absolute;left:1078px;top:182px;" width="18" height="18" viewBox="0 0 18 18"><path d="M0.5 4.5l4-4h11l-4 4z" fill="#d4eff9" stroke="#6bb6d6"/><path d="M11.5 4.5l4-4v11l-4 4z" fill="#8ccbe4" stroke="#6bb6d6"/><path d="M0.5 4.5h11v11h-11z" fill="#fff" stroke="#6bb6d6"/><path d="M18 14v4h-4z" fill="#333"/></svg>
<svg style="position:absolute;left:1106px;top:182px;" width="18" height="18" viewBox="0 0 18 18"><path d="M0.5 4.5l4-4h11l-4 4z" fill="#d4eff9" stroke="#6bb6d6"/><path d="M11.5 4.5l4-4v11l-4 4z" fill="#8ccbe4" stroke="#6bb6d6"/><path d="M0.5 4.5h11v11h-11z" fill="#fff" stroke="#6bb6d6"/><path d="M8.5 7.5h6.5v8h-6.5z" fill="#f3f3f3" stroke="#888"/><path d="M10 10h4M10 12h4M10 14h4" stroke="#777" stroke-width="0.7"/><path d="M18 14v4h-4z" fill="#333"/></svg>
<svg style="position:absolute;left:1134px;top:182px;" width="17" height="16" viewBox="0 0 17 16"><path d="M0.5 0.5h13v12h-13z" fill="#f4f4f4" stroke="#8a8a8a"/><path d="M1 3.5h12M1 6.5h12M1 9.5h12M4 1v11" stroke="#9a9a9a" stroke-width="0.8"/><path d="M6 9h2.5l1-1.5h3.5l1 1.5h2.5v6.5h-10.5z" fill="#333"/><circle cx="11.3" cy="12" r="2.3" fill="#888" stroke="#ddd" stroke-width="0.6"/></svg>
<svg style="position:absolute;left:1161px;top:182px;" width="21" height="18" viewBox="0 0 21 18"><path d="M1.1 0.2l4.6 4.6M5.7 0.2L1.1 4.8M8.6 3.7l2.6-3.3M6.2 9.3l2.4-3M3.75 15.5l2.65-3.1M16 5.4l-4.8 10.1M11.6 7.2l4.4 8.3M9 11.3h7.9" stroke="#7c5c1f" stroke-width="1.7"/><path d="M20 15v2.7h-2.7z" fill="#333"/></svg>
<div style="position:absolute;left:1186px;top:177px;width:25px;height:26px;background:linear-gradient(#e8e9ea,#d2d4d6);border:1px solid #c4c6c8;border-top:2px solid #a9abad;box-sizing:border-box"></div>
<svg style="position:absolute;left:1189px;top:182px;" width="18" height="17" viewBox="0 0 18 17"><rect x="1.4" y="0.4" width="9" height="6" fill="#fff8e2" stroke="#8a8a8a" stroke-width="1.1"/><path d="M10.8 3.4h6M15.8 3.4l-1.8 5" stroke="#333" stroke-width="1.1"/><path d="M12.3 9l1.8-3.5 2.6 3z" fill="#333"/><path d="M8.1 13.5c2.5-3.4 6.3-3.4 8.8 0-2.5 3.4-6.3 3.4-8.8 0z" fill="#3a3d40"/><circle cx="12.5" cy="13.5" r="1.5" fill="#fff"/><circle cx="12.5" cy="13.5" r="0.6" fill="#3a3d40"/></svg>
<svg style="position:absolute;left:1216px;top:182px;" width="17" height="16" viewBox="0 0 17 16"><path d="M4.3 3.2L9.4 8.5 4.3 13.5M9.4 8.5h5" stroke="#333" stroke-width="1.3" fill="none"/><circle cx="4.3" cy="3.2" r="2.5" fill="#6fb36f"/><circle cx="14.4" cy="8.5" r="2.5" fill="#e88080"/><circle cx="4.3" cy="13.5" r="2.5" fill="#3f8fba"/></svg>
<div style="position:absolute;left:4px;top:998px;width:1912px;height:2px;background:#8f9090"></div>
<div style="position:absolute;left:4px;top:1000px;width:1912px;height:36px;background:#eef0f2"></div>
<div style="position:absolute;left:10px;top:1010px;width:22px;height:22px;background:linear-gradient(#f7f7f7,#dcdcdc);border:1px solid #bdbdbd;border-top:2px solid #9c9c9c;box-sizing:border-box"></div>
<div style="position:absolute;left:36px;top:1010px;width:22px;height:22px;background:#f4f4f4;border:1px solid #c9c9c9;box-sizing:border-box"></div>
<svg style="position:absolute;left:17px;top:1013px;" width="12" height="16" viewBox="0 0 12 16"><rect x="1" y="0.5" width="3" height="3" fill="#fff" stroke="#333" stroke-width="1"/><rect x="1" y="6.5" width="3" height="3" fill="#fff" stroke="#333" stroke-width="1"/><rect x="1" y="12.5" width="3" height="3" fill="#fff" stroke="#333" stroke-width="1"/><rect x="7.5" y="6.5" width="3" height="3" fill="#fff" stroke="#333" stroke-width="1"/><path d="M2.5 3.5v3M2.5 9.5v3M4 8h3.5" stroke="#333" stroke-width="0.7"/></svg>
<svg style="position:absolute;left:39px;top:1013px;" width="16" height="16" viewBox="0 0 16 16"><defs><radialGradient id="glb" cx="0.6" cy="0.4" r="0.7"><stop offset="0" stop-color="#bfe6fa"/><stop offset="1" stop-color="#2a8ccc"/></radialGradient></defs><circle cx="8.5" cy="8" r="6.3" fill="url(#glb)"/><ellipse cx="8" cy="8" rx="8" ry="3" transform="rotate(-40 8 8)" fill="none" stroke="#444" stroke-width="0.9"/></svg>
<div style="position:absolute;left:67px;top:1010px;width:1px;height:22px;background:#d2d5d8"></div>
<svg style="position:absolute;left:72px;top:1009px;" width="13" height="12" viewBox="0 0 13 12"><rect x="0.5" y="0.5" width="11.5" height="11" fill="#b9e6f7" stroke="#1a6f9a" stroke-width="1.2"/><path d="M7 1L3 6l4 5M9.5 1L5.5 6l4 5" fill="none" stroke="#1a6f9a" stroke-width="1"/></svg>
<div class="t" style="left:84.62px;top:1010.19px;font-size:11px;line-height:11px;font-weight:400;color:#333;transform:scaleX(0.9764);transform-origin:0 0;">Lesen der Modellbaum config Datei $TBXCONFIG\tree\tree_col_no.cfg war nicht möglich.</div>
<div style="position:absolute;left:1466px;top:1002px;width:1px;height:30px;background:#d3d6d9"></div>
<div style="position:absolute;left:1467px;top:1002px;width:1px;height:30px;background:#fbfbfb"></div>
<div style="position:absolute;left:1496px;top:1002px;width:1px;height:30px;background:#d3d6d9"></div>
<div style="position:absolute;left:1497px;top:1002px;width:1px;height:30px;background:#fbfbfb"></div>
<div style="position:absolute;left:1532px;top:1002px;width:1px;height:30px;background:#d3d6d9"></div>
<div style="position:absolute;left:1533px;top:1002px;width:1px;height:30px;background:#fbfbfb"></div>
<div style="position:absolute;left:1573px;top:1002px;width:1px;height:30px;background:#d3d6d9"></div>
<div style="position:absolute;left:1574px;top:1002px;width:1px;height:30px;background:#fbfbfb"></div>
<div style="position:absolute;left:1620px;top:1002px;width:1px;height:30px;background:#d3d6d9"></div>
<div style="position:absolute;left:1621px;top:1002px;width:1px;height:30px;background:#fbfbfb"></div>
<svg style="position:absolute;left:1502px;top:1011px;" width="30" height="12" viewBox="0 0 30 12"><circle cx="6" cy="6" r="5.2" fill="#4fd14f"/><circle cx="16" cy="6" r="3" fill="#cfcfcf"/><circle cx="23.5" cy="6" r="3" fill="#cfcfcf"/></svg>
<svg style="position:absolute;left:1538px;top:1009px;" width="13" height="17" viewBox="0 0 13 17"><path d="M1 0.5v16" stroke="#a6a6a6" stroke-width="1.6"/><path d="M1.5 0.5h11l-4 4 4 4h-11z" fill="#b0b0b0"/></svg>
<div style="position:absolute;left:1577px;top:1004px;width:40px;height:28px;background:linear-gradient(#f8f8f8,#e8e8e8);border:1px solid #c6c6c6;border-radius:3px;box-sizing:border-box"></div>
<div style="position:absolute;left:1623px;top:1004px;width:40px;height:28px;background:linear-gradient(#f8f8f8,#e8e8e8);border:1px solid #c6c6c6;border-radius:3px;box-sizing:border-box"></div>
<svg style="position:absolute;left:1588px;top:1010px;" width="17" height="16" viewBox="0 0 17 16"><path d="M3 0.5h3.5v5h-3.5zM10.5 0.5h3.5v5h-3.5z" fill="#444"/><path d="M1 6l2-2h4v11h-6.5zM16 6l-2-2h-4v11h6.5z" fill="url(#bino)"/><path d="M7 6h3v6h-3z" fill="#444"/></svg>
<svg style="position:absolute;left:1634px;top:1009px;" width="18" height="18" viewBox="0 0 18 18"><path d="M0.5 4.5l4-4h12.5l-4 4z" fill="#fff" stroke="#222" stroke-width="1.1"/><path d="M13 4.5l4-4v12.5l-4 4z" fill="#fff" stroke="#222" stroke-width="1.1"/><path d="M0.5 4.5h12.5v12.5h-12.5z" fill="#fff" stroke="#222" stroke-width="1.1"/><path d="M2.5 8.5l2-2h5v7h-7z" fill="#fde9c4" stroke="#c49a50"/><path d="M5 7l2-2h4.5v5l-2 2h-4.5z" fill="#a9e3f6" stroke="#1f87bd"/></svg>
<div style="position:absolute;left:1747px;top:1007px;width:152px;height:21px;background:linear-gradient(#fff,#f2f2f2);border:1px solid #c6c9cc;box-sizing:border-box"></div>
<div style="position:absolute;left:1883px;top:1008px;width:1px;height:19px;background:#c6c9cc"></div>
<div style="position:absolute;left:1884px;top:1008px;width:14px;height:19px;background:linear-gradient(#f8f8f8,#e6e6e6)"></div>
<svg style="position:absolute;left:1887px;top:1016px;" width="7" height="4" viewBox="0 0 7 4"><path d="M0 0H7L3.5 4Z" fill="#6a6a6a"/></svg>
<div class="t" style="left:1755.00px;top:1012.19px;font-size:11px;line-height:11px;font-weight:400;color:#333;transform:scaleX(0.9167);transform-origin:0 0;">Smart</div>
</body></html>
